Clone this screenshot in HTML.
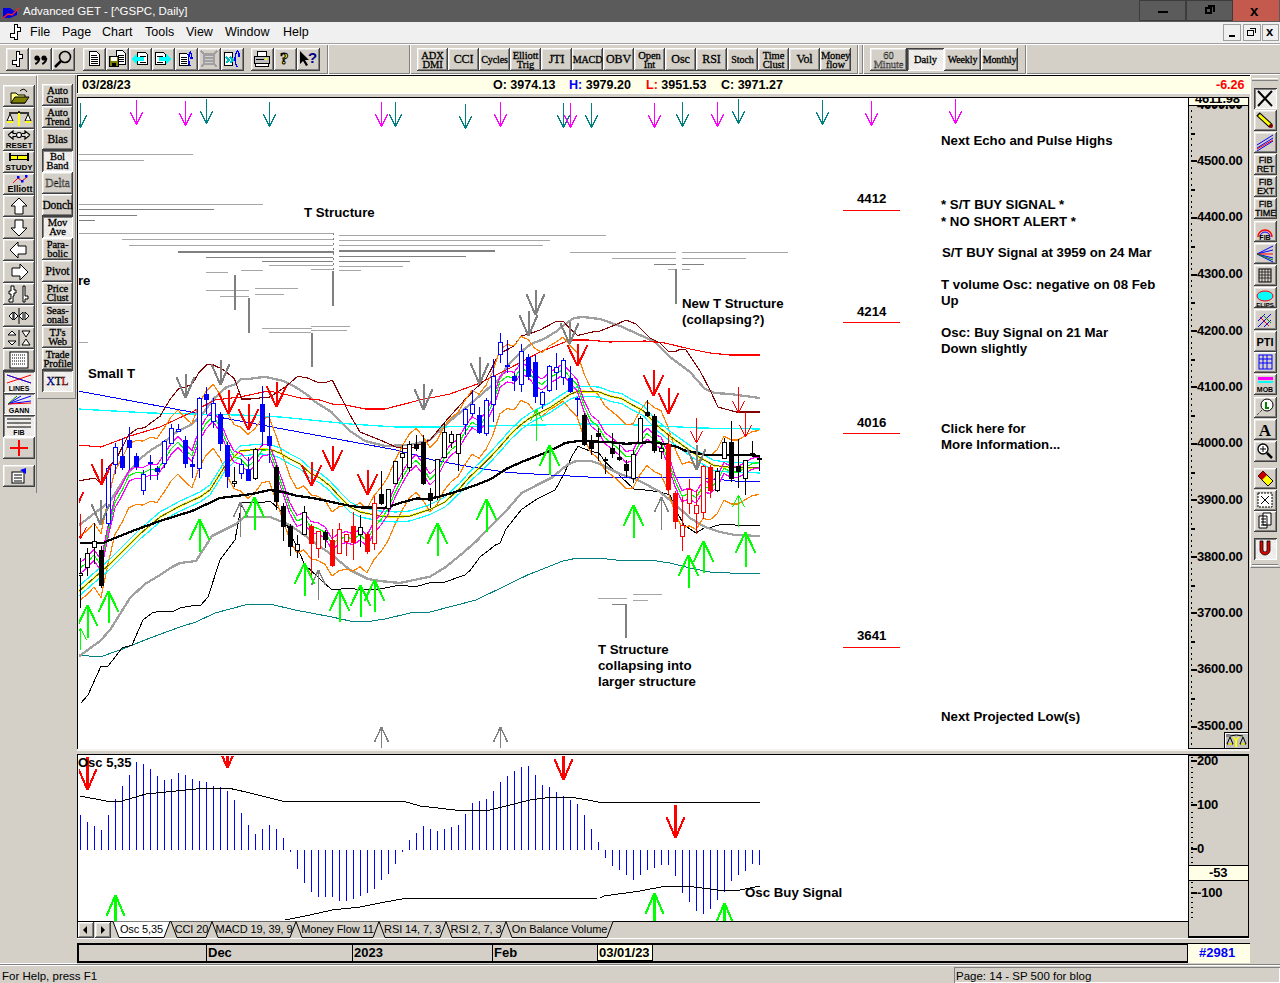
<!DOCTYPE html>
<html><head><meta charset="utf-8">
<style>
*{box-sizing:border-box;margin:0;padding:0}
html,body{width:1280px;height:983px;overflow:hidden;background:#d4d0c8;font-family:"Liberation Sans",sans-serif;position:relative}
.a{position:absolute}
.btn{position:absolute;background:#d4d0c8;box-shadow:inset -1px -1px #404040,inset 1px 1px #ffffff,inset -2px -2px #808080,inset 2px 2px #e8e6e2}
.prs{position:absolute;background-color:#e9e7e3;background-image:repeating-linear-gradient(45deg,rgba(255,255,255,.5) 0 1px,transparent 1px 2px);box-shadow:inset 1px 1px #404040,inset -1px -1px #ffffff,inset 2px 2px #808080}
.tl{position:absolute;left:0;right:0;text-align:center;font-family:"Liberation Serif",serif;color:#000;line-height:9px;font-size:11px}
.tb{font-family:"Liberation Serif",serif;font-size:11px;line-height:9px;text-align:center;color:#000;display:flex;align-items:center;justify-content:center;height:100%;letter-spacing:-0.1px;-webkit-text-stroke:0.3px #000}
.sunk{position:absolute;box-shadow:inset 1px 1px #808080,inset -1px -1px #ffffff}
.lbl{position:absolute;font-weight:bold;font-size:13.25px;color:#000;white-space:nowrap;line-height:16px}
.ax{position:absolute;font-weight:bold;font-size:13px;color:#000;white-space:nowrap;line-height:14px;letter-spacing:-0.2px}
svg{position:absolute;left:0;top:0}
</style></head><body>
<!-- title bar -->
<div class="a" style="left:0;top:0;width:1280px;height:22px;background:#5b5b5b"></div>
<svg width="20" height="16" style="left:2px;top:5px" viewBox="0 0 20 16"><path d="M1,3 L8,3 L12,6 L15,5 L15,10 L8,13 L1,13Z" fill="#0000e0"/><path d="M1,13 L6,9 L10,10 L17,3" stroke="#ff2020" stroke-width="1.4" fill="none"/></svg>
<div class="a" style="left:23px;top:3px;font-size:11.5px;color:#fff;white-space:nowrap;line-height:17px">Advanced GET - [^GSPC, Daily]</div>
<div class="a" style="left:1139px;top:0;width:47px;height:21px;background:#5b5b5b;border:1px solid #3c3c3c"></div>
<div class="a" style="left:1158px;top:11px;width:10px;height:2px;background:#000"></div>
<div class="a" style="left:1186px;top:0;width:47px;height:21px;background:#5b5b5b;border:1px solid #3c3c3c"></div>
<div class="a" style="left:1205px;top:7px;width:7px;height:7px;border:2px solid #000"></div>
<div class="a" style="left:1208px;top:5px;width:7px;height:7px;border-top:2px solid #000;border-right:2px solid #000"></div>
<div class="a" style="left:1233px;top:0;width:46px;height:21px;background:#c45a4e"></div>
<div class="a" style="left:1250px;top:2px;font-size:15px;font-weight:bold;color:#000;line-height:17px">x</div>
<!-- menu bar -->
<div class="a" style="left:0;top:22px;width:1280px;height:21px;background:#f0f0f0"></div>
<svg width="14" height="18" style="left:9px;top:23px" shape-rendering="crispEdges"><path d="M5.5,1.5 h3 v3 h3 v4 h-3 v8 h-3 v-2 h-4 v-4 h4z" fill="#fff" stroke="#000" stroke-width="1.3"/></svg>
<div class="a" style="left:30px;top:24px;font-size:12.5px;color:#000;line-height:17px;white-space:nowrap;word-spacing:0">File</div>
<div class="a" style="left:62px;top:24px;font-size:12.5px;color:#000;line-height:17px">Page</div>
<div class="a" style="left:102px;top:24px;font-size:12.5px;color:#000;line-height:17px">Chart</div>
<div class="a" style="left:145px;top:24px;font-size:12.5px;color:#000;line-height:17px">Tools</div>
<div class="a" style="left:186px;top:24px;font-size:12.5px;color:#000;line-height:17px">View</div>
<div class="a" style="left:225px;top:24px;font-size:12.5px;color:#000;line-height:17px">Window</div>
<div class="a" style="left:283px;top:24px;font-size:12.5px;color:#000;line-height:17px">Help</div>
<div class="a" style="left:1223px;top:24px;width:18px;height:17px;background:#f0f0f0;border:1px solid #a0a0a0"></div>
<div class="a" style="left:1229px;top:35px;width:6px;height:2px;background:#000"></div>
<div class="a" style="left:1243px;top:24px;width:18px;height:17px;background:#f0f0f0;border:1px solid #a0a0a0"></div>
<div class="a" style="left:1247px;top:30px;width:7px;height:6px;border:1.5px solid #000"></div>
<div class="a" style="left:1250px;top:28px;width:6px;height:5px;border-top:1.5px solid #000;border-right:1.5px solid #000"></div>
<div class="a" style="left:1262px;top:24px;width:17px;height:17px;background:#f0f0f0;border:1px solid #a0a0a0"></div>
<div class="a" style="left:1266px;top:24px;font-size:13px;font-weight:bold;line-height:16px">x</div>
<!-- toolbar -->
<div class="a" style="left:0;top:43px;width:1280px;height:1px;background:#a0a0a0"></div>
<div class="a" style="left:0;top:44px;width:1280px;height:1px;background:#ffffff"></div>
<div class="a" style="left:0;top:73px;width:1280px;height:1px;background:#808080"></div>
<div class="a" style="left:0;top:74px;width:1280px;height:1px;background:#ffffff"></div>
<div class="a" style="left:327px;top:45px;width:2px;height:29px;border-left:1px solid #808080;border-right:1px solid #fff"></div>
<div class="a" style="left:409px;top:45px;width:2px;height:29px;border-left:1px solid #808080;border-right:1px solid #fff"></div>
<div class="a" style="left:857px;top:45px;width:2px;height:29px;border-left:1px solid #808080;border-right:1px solid #fff"></div>
<div class="a" style="left:862px;top:45px;width:2px;height:29px;border-left:1px solid #808080;border-right:1px solid #fff"></div>
<div class="a" style="left:1025px;top:45px;width:2px;height:29px;border-left:1px solid #808080;border-right:1px solid #fff"></div>
<div class="btn" style="left:6px;top:48px;width:23px;height:23px"><div style="position:relative;width:23px;height:23px"><svg width="22" height="22" shape-rendering="crispEdges"><path d="M10.5,3.5 h3 v3 h3 v4 h-3 v8 h-3 v-2 h-4 v-4 h4z" fill="#fff" stroke="#000" stroke-width="1.2"/></svg></div></div>
<div class="btn" style="left:29px;top:48px;width:23px;height:23px"><div style="position:relative;width:23px;height:23px"><svg width="22" height="22"><circle cx="8" cy="10" r="2.6" fill="#000"/><path d="M10.3,10 q0,4 -4,6" stroke="#000" stroke-width="2" fill="none"/><circle cx="15" cy="10" r="2.6" fill="#000"/><path d="M17.3,10 q0,4 -4,6" stroke="#000" stroke-width="2" fill="none"/></svg></div></div>
<div class="btn" style="left:52px;top:48px;width:23px;height:23px"><div style="position:relative;width:23px;height:23px"><svg width="22" height="22"><circle cx="13" cy="9" r="5.5" fill="none" stroke="#000" stroke-width="1.6"/><path d="M9,13 L3,19" stroke="#000" stroke-width="2.5"/></svg></div></div>
<div class="btn" style="left:83px;top:48px;width:23px;height:23px"><div style="position:relative;width:23px;height:23px"><svg width="22" height="22" shape-rendering="crispEdges"><path d="M6.5,3.5 h7 l3,3 v11 h-10z" fill="#fff" stroke="#000"/><path d="M8,7.5h6M8,9.5h7M8,11.5h7M8,13.5h7M8,15.5h7" stroke="#000"/></svg></div></div>
<div class="btn" style="left:106px;top:48px;width:23px;height:23px"><div style="position:relative;width:23px;height:23px"><svg width="22" height="22" shape-rendering="crispEdges"><path d="M10.5,2.5 h6 l3,3 v11 h-9z" fill="#fff" stroke="#000"/><path d="M12,7.5h6M12,9.5h6M12,11.5h6M12,13.5h6" stroke="#000"/><rect x="3.5" y="8.5" width="9" height="10" fill="#808000" stroke="#000"/><rect x="5" y="9" width="6" height="4" fill="#fff"/><rect x="6" y="15" width="4" height="3" fill="#000"/></svg></div></div>
<div class="btn" style="left:129px;top:48px;width:23px;height:23px"><div style="position:relative;width:23px;height:23px"><svg width="22" height="22" shape-rendering="crispEdges"><path d="M8.5,4.5 h8 l2,2 v10 h-10z" fill="#fff" stroke="#000"/><path d="M11,8.5h6M11,14.5h6" stroke="#000"/><path d="M2,11 l6,-5 v3 h7 v4 h-7 v3z" fill="#00ffff"/></svg></div></div>
<div class="btn" style="left:152px;top:48px;width:23px;height:23px"><div style="position:relative;width:23px;height:23px"><svg width="22" height="22" shape-rendering="crispEdges"><path d="M3.5,4.5 h8 l2,2 v10 h-10z" fill="#fff" stroke="#000"/><path d="M5,8.5h6M5,14.5h6" stroke="#000"/><path d="M20,11 l-6,-5 v3 h-7 v4 h7 v3z" fill="#00ffff"/></svg></div></div>
<div class="btn" style="left:175px;top:48px;width:23px;height:23px"><div style="position:relative;width:23px;height:23px"><svg width="22" height="22" shape-rendering="crispEdges"><path d="M4.5,5.5 h7 l2,2 v10 h-9z" fill="#fff" stroke="#000"/><path d="M6,9.5h6M6,11.5h6M6,13.5h6M6,15.5h6" stroke="#000"/><path d="M15,4 q-3,7 0,14 M15,4 q3,3 1,6 l2,0" fill="none" stroke="#0000ff" stroke-width="1.5"/></svg></div></div>
<div class="btn" style="left:198px;top:48px;width:23px;height:23px"><div style="position:relative;width:23px;height:23px"><svg width="22" height="22" shape-rendering="crispEdges"><rect x="5" y="5" width="12" height="12" fill="#a0a0a0"/><path d="M3,3 L19,19 M19,3 L3,19" stroke="#a0a0a0" stroke-width="2"/><path d="M7,8h8M7,11h8M7,14h8" stroke="#d0d0d0"/></svg></div></div>
<div class="btn" style="left:221px;top:48px;width:23px;height:23px"><div style="position:relative;width:23px;height:23px"><svg width="22" height="22" shape-rendering="crispEdges"><path d="M3.5,4.5 h8 v13 h-8z" fill="#fff" stroke="#000"/><path d="M5,9 l3,3 l-3,3 M9,9 l3,3 l-3,3" fill="none" stroke="#00c0c0" stroke-width="1.5"/><path d="M16,3 q-4,8 0,16 M16,3 q3,2 2,6" fill="none" stroke="#0000ff" stroke-width="1.5"/></svg></div></div>
<div class="btn" style="left:251px;top:48px;width:23px;height:23px"><div style="position:relative;width:23px;height:23px"><svg width="22" height="22" shape-rendering="crispEdges"><path d="M6.5,3.5 h9 v5 h-9z" fill="#fff" stroke="#000"/><path d="M3.5,8.5 h15 v7 h-15z" fill="#c0c0c0" stroke="#000"/><path d="M4.5,15.5 h13 v3 h-13z" fill="#fff" stroke="#000"/><path d="M5,11.5h8" stroke="#000"/><rect x="14" y="10" width="2" height="2" fill="#ff0"/></svg></div></div>
<div class="btn" style="left:274px;top:48px;width:23px;height:23px"><div style="position:relative;width:23px;height:23px"><div style="position:absolute;left:6px;top:1px;font:bold 17px 'Liberation Serif',serif;color:#ff0;-webkit-text-stroke:1px #000">?</div></div></div>
<div class="btn" style="left:297px;top:48px;width:23px;height:23px"><div style="position:relative;width:23px;height:23px"><svg width="22" height="22"><path d="M3,3 v13 l3,-3 l3,5 l2,-1 l-3,-5 h4z" fill="#000"/></svg><div style="position:absolute;left:11px;top:1px;font:bold 15px 'Liberation Sans',sans-serif;color:#000080">?</div></div></div>
<div class="btn" style="left:417px;top:48px;width:31px;height:23px"><div class="tb" style="font-size:10.5px">ADX<br>DMI</div></div>
<div class="btn" style="left:448px;top:48px;width:31px;height:23px"><div class="tb" style="font-size:12px">CCI</div></div>
<div class="btn" style="left:479px;top:48px;width:31px;height:23px"><div class="tb" style="font-size:10px">Cycles</div></div>
<div class="btn" style="left:510px;top:48px;width:31px;height:23px"><div class="tb" style="font-size:10.5px">Elliott<br>Trig</div></div>
<div class="btn" style="left:541px;top:48px;width:31px;height:23px"><div class="tb" style="font-size:12px">JTI</div></div>
<div class="btn" style="left:572px;top:48px;width:31px;height:23px"><div class="tb" style="font-size:10px">MACD</div></div>
<div class="btn" style="left:603px;top:48px;width:31px;height:23px"><div class="tb" style="font-size:12px">OBV</div></div>
<div class="btn" style="left:634px;top:48px;width:31px;height:23px"><div class="tb" style="font-size:10.5px">Open<br>Int</div></div>
<div class="btn" style="left:665px;top:48px;width:31px;height:23px"><div class="tb" style="font-size:12px">Osc</div></div>
<div class="btn" style="left:696px;top:48px;width:31px;height:23px"><div class="tb" style="font-size:12px">RSI</div></div>
<div class="btn" style="left:727px;top:48px;width:31px;height:23px"><div class="tb" style="font-size:10px">Stoch</div></div>
<div class="btn" style="left:758px;top:48px;width:31px;height:23px"><div class="tb" style="font-size:10.5px">Time<br>Clust</div></div>
<div class="btn" style="left:789px;top:48px;width:31px;height:23px"><div class="tb" style="font-size:12px">Vol</div></div>
<div class="btn" style="left:820px;top:48px;width:31px;height:23px"><div class="tb" style="font-size:10.5px">Money<br>flow</div></div>
<div class="btn" style="left:870px;top:48px;width:37px;height:23px"><div class="tb" style="font-size:10.5px"><span style="color:#a0a0a0">60<br>Minute</span></div></div>
<div class="prs" style="left:907px;top:48px;width:37px;height:23px"><div class="tb" style="font-size:10.5px">Daily</div></div>
<div class="btn" style="left:944px;top:48px;width:37px;height:23px"><div class="tb" style="font-size:10px">Weekly</div></div>
<div class="btn" style="left:981px;top:48px;width:37px;height:23px"><div class="tb" style="font-size:10px">Monthly</div></div>
<!-- info bar -->
<div class="a" style="left:77px;top:75px;width:1173px;height:18px;background:#ffffe8;border-top:1px solid #000;border-left:1px solid #000"></div>
<div class="a" style="left:77px;top:93px;width:1173px;height:1px;background:#fff"></div>
<div class="lbl" style="left:82px;top:77px;font-size:12.5px">03/28/23</div>
<div class="lbl" style="left:493px;top:77px;font-size:12.5px">O: 3974.13</div>
<div class="lbl" style="left:569px;top:77px;font-size:12.5px"><span style="color:#0000ff">H:</span> 3979.20</div>
<div class="lbl" style="left:646px;top:77px;font-size:12.5px"><span style="color:#ff0000">L:</span> 3951.53</div>
<div class="lbl" style="left:721px;top:77px;font-size:12.5px">C: 3971.27</div>
<div class="lbl" style="left:1216px;top:77px;font-size:12.5px;color:#ff0000">-6.26</div>
<!-- left panels -->
<div class="a" style="left:0;top:75px;width:37px;height:418px;border-top:1px solid #fff;border-right:1px solid #808080"></div>
<div class="a" style="left:37px;top:75px;width:39px;height:324px;border-left:1px solid #fff;border-right:1px solid #808080;border-bottom:1px solid #808080"></div>
<div class="a" style="left:0;top:963px;width:77px;height:1px;background:#fff"></div>
<div class="btn" style="left:3px;top:85px;width:32px;height:22px"><svg style="position:absolute;left:0;top:0" width="32" height="22"><path d="M8,8 h5 l2,2 h7 v8 h-14z" fill="#ffff80" stroke="#000"/><path d="M8,18 l4,-6 h14 l-4,6z" fill="#808000" stroke="#000"/><path d="M17,6 q4,-4 7,1" fill="none" stroke="#000"/></svg></div>
<div class="btn" style="left:3px;top:107px;width:32px;height:22px"><svg style="position:absolute;left:0;top:0" width="32" height="22"><path d="M16,4 v15 M6,6 h20" stroke="#000" stroke-width="1.5"/><path d="M16,6 v13" stroke="#ff0" stroke-width="2"/><path d="M4,14 l3,-7 l3,7z M22,14 l3,-7 l3,7z" fill="#fff" stroke="#000"/><path d="M4,15h6M22,15h6" stroke="#ff0" stroke-width="2"/></svg></div>
<div class="btn" style="left:3px;top:129px;width:32px;height:22px"><svg style="position:absolute;left:0;top:0" width="32" height="22"><path d="M5,6 L10,2 V4.5 H13 M5,6 L10,10 V7.5 H13 M27,6 L22,2 V4.5 H19 M27,6 L22,10 V7.5 H19" fill="#fff" stroke="#000" stroke-width="1.2"/><circle cx="16" cy="6" r="2.5" fill="#fff" stroke="#000" stroke-width="1.2"/><text x="16" y="19" font-size="8" font-weight="bold" text-anchor="middle" font-family="Liberation Sans">RESET</text></svg></div>
<div class="btn" style="left:3px;top:151px;width:32px;height:22px"><svg style="position:absolute;left:0;top:0" width="32" height="22" shape-rendering="crispEdges"><rect x="7" y="4" width="18" height="4" fill="#ff0" stroke="#000"/><path d="M7,2v8M25,2v8" stroke="#000" stroke-width="2"/><path d="M14,4v4" stroke="#000"/><text x="16" y="19" font-size="8" font-weight="bold" text-anchor="middle" font-family="Liberation Sans">STUDY</text></svg></div>
<div class="btn" style="left:3px;top:173px;width:32px;height:22px"><svg style="position:absolute;left:0;top:0" width="32" height="22"><path d="M10,10 l5,-5 l4,3 l5,-4" fill="none" stroke="#f00"/><rect x="14" y="3" width="2.5" height="2.5" fill="#00f"/><rect x="18" y="7" width="2.5" height="2.5" fill="#00f"/><rect x="22" y="2" width="2.5" height="2.5" fill="#00f"/><text x="17" y="19" font-size="9" font-weight="bold" text-anchor="middle" font-family="Liberation Sans">Elliott</text></svg></div>
<div class="btn" style="left:3px;top:195px;width:32px;height:22px"><svg style="position:absolute;left:0;top:0" width="32" height="22"><path d="M16,3 l8,8 h-4 v8 h-8 v-8 h-4z" fill="#fff" stroke="#000"/></svg></div>
<div class="btn" style="left:3px;top:217px;width:32px;height:22px"><svg style="position:absolute;left:0;top:0" width="32" height="22"><path d="M16,19 l8,-8 h-4 v-8 h-8 v8 h-4z" fill="#fff" stroke="#000"/></svg></div>
<div class="btn" style="left:3px;top:239px;width:32px;height:22px"><svg style="position:absolute;left:0;top:0" width="32" height="22"><path d="M7,11 l8,-8 v4 h8 v8 h-8 v4z" fill="#fff" stroke="#000"/></svg></div>
<div class="btn" style="left:3px;top:261px;width:32px;height:22px"><svg style="position:absolute;left:0;top:0" width="32" height="22"><path d="M25,11 l-8,-8 v4 h-8 v8 h8 v4z" fill="#fff" stroke="#000"/></svg></div>
<div class="btn" style="left:3px;top:283px;width:32px;height:22px"><svg style="position:absolute;left:0;top:0" width="32" height="22"><path d="M8,3 h3 v4 h2 v3 h-2 v3 h-1 v6 h-4 v-3 h2 v-5 h-2 v-3 h2z M20,3 h2 v10 h3 v3 h-3 v3 h-2z" fill="#fff" stroke="#000"/></svg></div>
<div class="btn" style="left:3px;top:305px;width:32px;height:22px"><svg style="position:absolute;left:0;top:0" width="32" height="22"><path d="M6,11 l4,-4 v8z M11,7 l4,4 l-4,4z M20,7 l-4,4 l4,4z M22,7 l4,4 l-4,4z" fill="#fff" stroke="#000"/><path d="M16,3v16" stroke="#000"/></svg></div>
<div class="btn" style="left:3px;top:327px;width:32px;height:22px"><svg style="position:absolute;left:0;top:0" width="32" height="22"><path d="M9,4 l4,4 h-8z M9,18 l4,-4 h-8z M19,4 h8 l-4,6z M19,18 h8 l-4,-6z" fill="#fff" stroke="#000"/><path d="M16,3v16" stroke="#000"/></svg></div>
<div class="btn" style="left:3px;top:349px;width:32px;height:22px"><svg style="position:absolute;left:0;top:0" width="32" height="22"><rect x="7" y="3" width="18" height="16" fill="#fff" stroke="#000"/><path d="M7,3h18v16h-18z" fill="url(#dots)" /><g stroke="#000" stroke-dasharray="1,1"><path d="M9,6h14M9,9h14M9,12h14M9,15h14"/></g></svg></div>
<div class="prs" style="left:3px;top:371px;width:32px;height:22px"><svg style="position:absolute;left:0;top:0" width="32" height="22"><path d="M4,4 L28,12 M4,12 L28,4" stroke="#f00"/><path d="M4,4 L28,12" stroke="#00f"/><text x="16" y="20" font-size="7" font-weight="bold" text-anchor="middle" font-family="Liberation Sans">LINES</text></svg></div>
<div class="prs" style="left:3px;top:393px;width:32px;height:22px"><svg style="position:absolute;left:0;top:0" width="32" height="22"><path d="M5,11 L28,3 M5,11 L28,8 M5,11 L18,3" stroke="#00f"/><path d="M5,11 L28,10" stroke="#f00"/><path d="M5,11 L14,3" stroke="#080"/><text x="16" y="20" font-size="7" font-weight="bold" text-anchor="middle" font-family="Liberation Sans">GANN</text></svg></div>
<div class="prs" style="left:3px;top:415px;width:32px;height:22px"><svg style="position:absolute;left:0;top:0" width="32" height="22"><path d="M4,4h24M4,8h24M4,12h24" stroke="#000"/><text x="16" y="20" font-size="7" font-weight="bold" text-anchor="middle" font-family="Liberation Sans">FIB</text></svg></div>
<div class="btn" style="left:3px;top:437px;width:32px;height:22px"><svg style="position:absolute;left:0;top:0" width="32" height="22"><path d="M16,3v16M7,11h18" stroke="#f00" stroke-width="2"/></svg></div>
<div class="btn" style="left:3px;top:465px;width:32px;height:22px"><svg style="position:absolute;left:0;top:0" width="32" height="22"><rect x="9" y="7" width="12" height="11" fill="#fff" stroke="#000"/><path d="M11,10h8M11,13h8M11,16h8" stroke="#000"/><path d="M17,5 l6,-2 v6z" fill="#00f"/></svg></div>
<div class="btn" style="left:42px;top:84px;width:31px;height:22px"><div class="tb" style="font-size:10.5px">Auto<br>Gann</div></div>
<div class="btn" style="left:42px;top:106px;width:31px;height:22px"><div class="tb" style="font-size:10.5px">Auto<br>Trend</div></div>
<div class="btn" style="left:42px;top:128px;width:31px;height:22px"><div class="tb" style="font-size:11.5px">Bias</div></div>
<div class="prs" style="left:42px;top:150px;width:31px;height:22px"><div class="tb" style="font-size:10.5px">Bol<br>Band</div></div>
<div class="btn" style="left:42px;top:172px;width:31px;height:22px"><div class="tb" style="font-size:11.5px"><span style="color:#909090">Delta</span></div></div>
<div class="btn" style="left:42px;top:194px;width:31px;height:22px"><div class="tb" style="font-size:11.5px">Donch</div></div>
<div class="prs" style="left:42px;top:216px;width:31px;height:22px"><div class="tb" style="font-size:10.5px">Mov<br>Ave</div></div>
<div class="btn" style="left:42px;top:238px;width:31px;height:22px"><div class="tb" style="font-size:10.5px">Para-<br>bolic</div></div>
<div class="btn" style="left:42px;top:260px;width:31px;height:22px"><div class="tb" style="font-size:11.5px">Pivot</div></div>
<div class="btn" style="left:42px;top:282px;width:31px;height:22px"><div class="tb" style="font-size:10.5px">Price<br>Clust</div></div>
<div class="btn" style="left:42px;top:304px;width:31px;height:22px"><div class="tb" style="font-size:10.5px">Seas-<br>onals</div></div>
<div class="btn" style="left:42px;top:326px;width:31px;height:22px"><div class="tb" style="font-size:10.5px">TJ's<br>Web</div></div>
<div class="btn" style="left:42px;top:348px;width:31px;height:22px"><div class="tb" style="font-size:10.5px">Trade<br>Profile</div></div>
<div class="prs" style="left:42px;top:370px;width:31px;height:22px"><div class="tb" style="font-size:11.5px"><span style="color:#00f">X</span>T<span style="color:#f00">L</span></div></div>
<!-- right toolbar -->
<div class="a" style="left:1250px;top:75px;width:30px;height:493px;border-left:1px solid #fff;border-bottom:1px solid #808080"></div>
<div class="a" style="left:1252px;top:78px;width:26px;height:3px;border-top:1px solid #fff;border-bottom:1px solid #808080"></div>
<div class="prs" style="left:1254px;top:88px;width:23px;height:21px"><svg style="position:absolute;left:0;top:0" width="22" height="21"><path d="M4,3 L18,18 M18,3 L4,18" stroke="#000" stroke-width="2"/></svg></div>
<div class="btn" style="left:1254px;top:110px;width:23px;height:21px"><svg style="position:absolute;left:0;top:0" width="22" height="21"><path d="M4,4 L17,16" stroke="#000" stroke-width="5"/><path d="M5,5 L16,15" stroke="#ff0" stroke-width="3"/><circle cx="17" cy="16" r="2" fill="#800000"/></svg></div>
<div class="btn" style="left:1254px;top:132px;width:23px;height:21px"><svg style="position:absolute;left:0;top:0" width="22" height="21"><path d="M3,16 L19,6M3,13 L19,3M3,19 L19,9" stroke="#00f"/><path d="M3,17 L19,8" stroke="#f00"/></svg></div>
<div class="btn" style="left:1254px;top:154px;width:23px;height:21px"><div class="tb" style="font-family:'Liberation Sans',sans-serif;font-size:9px;line-height:9px">FIB<br>RET</div></div>
<div class="btn" style="left:1254px;top:176px;width:23px;height:21px"><div class="tb" style="font-family:'Liberation Sans',sans-serif;font-size:9px;line-height:9px">FIB<br>EXT</div></div>
<div class="btn" style="left:1254px;top:198px;width:23px;height:21px"><div class="tb" style="font-family:'Liberation Sans',sans-serif;font-size:9px;line-height:9px">FIB<br>TIME</div></div>
<div class="btn" style="left:1254px;top:221px;width:23px;height:21px"><svg style="position:absolute;left:0;top:0" width="22" height="21"><path d="M4,16 a7,7 0 0 1 14,0" fill="none" stroke="#f00" stroke-width="1.5"/><path d="M6,16 a5,5 0 0 1 10,0" fill="none" stroke="#00f"/><text x="11" y="19" font-size="7" font-weight="bold" text-anchor="middle" font-family="Liberation Sans">FIB</text></svg></div>
<div class="btn" style="left:1254px;top:243px;width:23px;height:21px"><svg style="position:absolute;left:0;top:0" width="22" height="21"><path d="M3,11 L19,3 M3,11 L19,7 M3,11 L19,15 M3,11 L19,19" stroke="#00f"/><path d="M3,11 L19,11" stroke="#f00"/><path d="M3,11 L19,17" stroke="#080"/></svg></div>
<div class="btn" style="left:1254px;top:265px;width:23px;height:21px"><svg style="position:absolute;left:0;top:0" width="22" height="21"><rect x="5" y="4" width="12" height="13" fill="none" stroke="#000"/><path d="M8,4v13M11,4v13M14,4v13M5,7h12M5,10h12M5,13h12" stroke="#000" stroke-width=".7"/></svg></div>
<div class="btn" style="left:1254px;top:287px;width:23px;height:21px"><svg style="position:absolute;left:0;top:0" width="22" height="21"><ellipse cx="11" cy="9" rx="8" ry="5" fill="#0ff" stroke="#f00"/><text x="11" y="20" font-size="6" font-weight="bold" text-anchor="middle" font-family="Liberation Sans">ELIPS</text></svg></div>
<div class="btn" style="left:1254px;top:309px;width:23px;height:21px"><svg style="position:absolute;left:0;top:0" width="22" height="21"><path d="M4,18 L17,5 M4,12 L11,5 M10,18 L17,11" stroke="#00f"/><path d="M6,8 L15,17" stroke="#f00"/><path d="M9,6 L17,14" stroke="#080"/></svg></div>
<div class="btn" style="left:1254px;top:331px;width:23px;height:21px"><svg style="position:absolute;left:0;top:0" width="22" height="21"><text x="11" y="15" font-size="11" font-weight="bold" text-anchor="middle" font-family="Liberation Sans">PTI</text></svg></div>
<div class="btn" style="left:1254px;top:352px;width:23px;height:21px"><svg style="position:absolute;left:0;top:0" width="22" height="21"><rect x="5" y="3" width="13" height="14" fill="none" stroke="#00f"/><path d="M9,3v14M13,3v14M5,7h13M5,11h13" stroke="#00f"/></svg></div>
<div class="btn" style="left:1254px;top:374px;width:23px;height:21px"><svg style="position:absolute;left:0;top:0" width="22" height="21"><rect x="4" y="3" width="15" height="3" fill="#f0f"/><rect x="4" y="7" width="15" height="2" fill="#0ff"/><text x="11" y="18" font-size="7" font-weight="bold" text-anchor="middle" font-family="Liberation Sans">MOB</text></svg></div>
<div class="btn" style="left:1254px;top:397px;width:23px;height:21px"><svg style="position:absolute;left:0;top:0" width="22" height="21"><circle cx="13" cy="8" r="6" fill="#fff" stroke="#000"/><path d="M12,5 v6 h3" stroke="#080" stroke-width="2" fill="none"/><path d="M8,13 L3,18" stroke="#000" stroke-dasharray="1,1"/></svg></div>
<div class="btn" style="left:1254px;top:419px;width:23px;height:21px"><svg style="position:absolute;left:0;top:0" width="22" height="21"><text x="11" y="17" font-size="17" font-weight="bold" text-anchor="middle" font-family="Liberation Serif">A</text></svg></div>
<div class="btn" style="left:1254px;top:441px;width:23px;height:21px"><svg style="position:absolute;left:0;top:0" width="22" height="21"><circle cx="9" cy="8" r="5" fill="#fff" stroke="#000" stroke-width="1.3"/><path d="M9,5v6M6,8h6" stroke="#000"/><path d="M13,12 L18,17" stroke="#000" stroke-width="2.5"/></svg></div>
<div class="btn" style="left:1254px;top:468px;width:23px;height:21px"><svg style="position:absolute;left:0;top:0" width="22" height="21"><path d="M4,8 L9,3 L19,13 L14,18z" fill="#ff0" stroke="#000"/><path d="M4,8 L9,3 L13,7 L8,12z" fill="#c00000"/></svg></div>
<div class="btn" style="left:1254px;top:490px;width:23px;height:21px"><svg style="position:absolute;left:0;top:0" width="22" height="21"><rect x="4" y="3" width="14" height="14" fill="#fff" stroke="#000" stroke-dasharray="2,1"/><path d="M7,6 L15,14 M15,6 L7,14" stroke="#000"/></svg></div>
<div class="btn" style="left:1254px;top:511px;width:23px;height:21px"><svg style="position:absolute;left:0;top:0" width="22" height="21"><path d="M5,5h8v12h-8z M9,2h8v12h-8z" fill="#fff" stroke="#000"/><path d="M7,8h5M7,11h5M7,14h5" stroke="#000"/></svg></div>
<div class="prs" style="left:1254px;top:538px;width:23px;height:22px"><svg style="position:absolute;left:0;top:0" width="22" height="21"><path d="M6,3 v9 a5,5 0 0 0 10,0 v-9 h-3 v9 a2,2 0 0 1 -4,0 v-9z" fill="#e00000" stroke="#000" stroke-width=".8"/></svg></div>
<div class="a" style="left:1252px;top:564px;width:26px;height:1px;background:#808080"></div><div class="a" style="left:1252px;top:565px;width:26px;height:1px;background:#fff"></div>
<!-- main chart -->
<div class="a" style="left:77px;top:97px;width:1112px;height:652px;background:#fff;border-top:1px solid #000;border-left:1px solid #000"></div>
<svg width="1280" height="983" style="left:0;top:0" shape-rendering="crispEdges">
<defs><clipPath id="cc"><rect x="79" y="98" width="1109" height="650"/></clipPath></defs>
<g clip-path="url(#cc)">
<line x1="78" y1="154.5" x2="193" y2="154.5" stroke="#a6a6a6" stroke-width="1"/>
<line x1="78" y1="160.5" x2="144" y2="160.5" stroke="#a6a6a6" stroke-width="1"/>
<line x1="78" y1="204.5" x2="263" y2="204.5" stroke="#a6a6a6" stroke-width="1"/>
<line x1="78" y1="209.5" x2="214" y2="209.5" stroke="#808080" stroke-width="1.3"/>
<line x1="78" y1="215.5" x2="137" y2="215.5" stroke="#808080" stroke-width="1.3"/>
<line x1="78" y1="220.5" x2="95" y2="220.5" stroke="#808080" stroke-width="1.3"/>
<line x1="78" y1="233.5" x2="333" y2="233.5" stroke="#a6a6a6" stroke-width="1"/>
<line x1="122" y1="239.5" x2="333" y2="239.5" stroke="#a6a6a6" stroke-width="1"/>
<line x1="129" y1="245.5" x2="333" y2="245.5" stroke="#a6a6a6" stroke-width="1"/>
<line x1="178" y1="251.5" x2="334" y2="251.5" stroke="#808080" stroke-width="2"/>
<line x1="206" y1="257.5" x2="333" y2="257.5" stroke="#808080" stroke-width="1.3"/>
<line x1="262" y1="261.5" x2="333" y2="261.5" stroke="#808080" stroke-width="1.3"/>
<line x1="269" y1="265.5" x2="333" y2="265.5" stroke="#a6a6a6" stroke-width="1"/>
<line x1="311" y1="269.5" x2="333" y2="269.5" stroke="#a6a6a6" stroke-width="1"/>
<line x1="206" y1="272.5" x2="228" y2="272.5" stroke="#a6a6a6" stroke-width="1"/>
<line x1="241" y1="270.5" x2="263" y2="270.5" stroke="#a6a6a6" stroke-width="1"/>
<line x1="206" y1="290.5" x2="249" y2="290.5" stroke="#a6a6a6" stroke-width="1"/>
<line x1="220" y1="296.5" x2="249" y2="296.5" stroke="#a6a6a6" stroke-width="1"/>
<line x1="255" y1="288.5" x2="298" y2="288.5" stroke="#a6a6a6" stroke-width="1"/>
<line x1="255" y1="294.5" x2="284" y2="294.5" stroke="#a6a6a6" stroke-width="1"/>
<line x1="262" y1="328.5" x2="312" y2="328.5" stroke="#a6a6a6" stroke-width="1"/>
<line x1="269" y1="332.5" x2="311" y2="332.5" stroke="#a6a6a6" stroke-width="1"/>
<line x1="311" y1="326.5" x2="350" y2="326.5" stroke="#a6a6a6" stroke-width="1"/>
<line x1="311" y1="330.5" x2="347" y2="330.5" stroke="#a6a6a6" stroke-width="1"/>
<line x1="78" y1="342.5" x2="88" y2="342.5" stroke="#a6a6a6" stroke-width="1"/>
<line x1="339" y1="235.5" x2="588" y2="235.5" stroke="#a6a6a6" stroke-width="1"/>
<line x1="339" y1="240.5" x2="550" y2="240.5" stroke="#a6a6a6" stroke-width="1"/>
<line x1="339" y1="245.5" x2="543" y2="245.5" stroke="#a6a6a6" stroke-width="1"/>
<line x1="339" y1="250.5" x2="495" y2="250.5" stroke="#808080" stroke-width="2"/>
<line x1="339" y1="256.5" x2="466" y2="256.5" stroke="#808080" stroke-width="1.3"/>
<line x1="339" y1="261.5" x2="410" y2="261.5" stroke="#808080" stroke-width="1.3"/>
<line x1="339" y1="266.5" x2="403" y2="266.5" stroke="#a6a6a6" stroke-width="1"/>
<line x1="339" y1="270.5" x2="361" y2="270.5" stroke="#a6a6a6" stroke-width="1"/>
<line x1="570" y1="252.5" x2="606" y2="252.5" stroke="#a6a6a6" stroke-width="1"/>
<line x1="588" y1="235.5" x2="606" y2="235.5" stroke="#a6a6a6" stroke-width="1"/>
<line x1="588" y1="252.5" x2="676" y2="252.5" stroke="#a6a6a6" stroke-width="1"/>
<line x1="682" y1="252.5" x2="788" y2="252.5" stroke="#a6a6a6" stroke-width="1"/>
<line x1="612" y1="258.5" x2="676" y2="258.5" stroke="#a6a6a6" stroke-width="1"/>
<line x1="682" y1="258.5" x2="746" y2="258.5" stroke="#a6a6a6" stroke-width="1"/>
<line x1="654" y1="264.5" x2="676" y2="264.5" stroke="#808080" stroke-width="1.5"/>
<line x1="682" y1="264.5" x2="704" y2="264.5" stroke="#808080" stroke-width="1.3"/>
<line x1="668" y1="269.5" x2="676" y2="269.5" stroke="#a6a6a6" stroke-width="1"/>
<line x1="682" y1="269.5" x2="690" y2="269.5" stroke="#a6a6a6" stroke-width="1"/>
<line x1="598" y1="598.5" x2="627" y2="598.5" stroke="#a6a6a6" stroke-width="1"/>
<line x1="633" y1="594.5" x2="662" y2="594.5" stroke="#a6a6a6" stroke-width="1"/>
<line x1="633" y1="600.5" x2="648" y2="600.5" stroke="#a6a6a6" stroke-width="1"/>
<line x1="612" y1="604.5" x2="625" y2="604.5" stroke="#808080" stroke-width="1.3"/>
<line x1="234.5" y1="275" x2="234.5" y2="310" stroke="#808080" stroke-width="2"/>
<line x1="248.5" y1="298" x2="248.5" y2="333" stroke="#808080" stroke-width="2"/>
<line x1="332.5" y1="271" x2="332.5" y2="306" stroke="#808080" stroke-width="2"/>
<line x1="311.5" y1="333" x2="311.5" y2="367" stroke="#808080" stroke-width="2"/>
<line x1="675.5" y1="269" x2="675.5" y2="304" stroke="#808080" stroke-width="2"/>
<line x1="625.5" y1="604" x2="625.5" y2="638" stroke="#808080" stroke-width="2"/>
<line x1="333.5" y1="233" x2="333.5" y2="271" stroke="#808080" stroke-width="1" stroke-dasharray="2,3"/>
<polyline points="78.0,655.0 100.0,657.0 120.0,650.0 150.0,638.0 180.0,627.0 196.0,622.0 215.0,613.0 245.0,605.0 270.0,604.0 295.0,610.0 332.0,617.0 350.0,621.0 365.0,622.0 385.0,619.0 410.0,613.0 430.0,612.0 476.0,600.0 527.6,575.0 562.7,561.0 576.0,558.3 590.0,559.0 598.0,558.0 625.0,561.0 650.0,560.0 670.0,563.0 690.0,568.0 710.0,572.0 730.0,573.0 760.0,573.0" fill="none" stroke="#008080" stroke-width="1" stroke-linejoin="round"/>
<polyline points="81.0,703.0 88.0,695.0 101.0,666.0 108.0,666.0 116.0,656.0 122.0,648.0 132.0,645.0 143.0,620.0 152.0,613.0 160.0,611.0 172.0,612.0 180.0,608.0 196.0,605.0 200.0,606.0 208.0,597.0 220.0,560.0 235.0,540.0 242.0,502.0 260.0,503.0 270.0,501.0 280.0,510.0 305.0,565.0 332.0,590.0 350.0,588.0 360.0,590.0 380.0,589.0 400.0,585.0 415.0,587.0 430.0,582.7 445.0,582.0 465.0,575.0 470.0,570.5 480.0,557.0 495.6,545.0 500.0,543.0 506.0,529.0 521.5,509.5 537.0,499.0 555.0,490.0 564.0,474.0 572.0,456.0 578.0,446.3 591.0,451.4 599.0,453.0 605.0,461.6 613.4,470.0 620.0,476.0 634.0,489.0 645.0,490.0 660.0,492.0 670.0,495.0 676.0,510.0 684.0,525.0 696.0,533.0 704.0,528.0 712.0,527.0 722.0,524.0 735.0,525.0 760.0,526.0" fill="none" stroke="#000000" stroke-width="1" stroke-linejoin="round"/>
<polyline points="78.0,657.0 100.0,641.0 110.0,630.0 130.0,598.0 145.0,584.0 160.0,575.0 172.0,567.0 180.0,563.0 196.0,561.0 212.0,536.0 236.0,524.0 244.0,517.0 270.0,517.0 290.0,525.0 332.0,555.0 350.0,570.0 368.0,579.0 380.0,581.0 400.0,583.0 430.0,576.6 445.0,567.5 460.5,555.0 476.0,541.5 491.0,526.0 506.0,511.0 521.5,493.0 537.0,485.0 552.0,477.5 567.0,465.0 575.0,461.4 590.0,460.7 600.0,464.0 620.0,474.0 640.0,481.0 660.0,492.0 676.0,505.0 690.0,518.0 705.0,527.0 720.0,532.0 735.0,535.0 760.0,536.0" fill="none" stroke="#a0a0a0" stroke-width="2.3" stroke-linejoin="round"/>
<polyline points="78.0,526.0 106.5,504.0 111.0,500.0 126.0,476.0 138.5,460.0 151.0,450.0 163.5,442.5 176.0,432.5 192.0,424.0 201.0,416.0 213.5,399.0 226.0,387.5 236.0,384.0 241.0,379.0 250.0,378.8 265.0,376.8 283.6,381.0 296.0,387.5 307.0,394.6 315.0,401.7 331.4,412.0 350.0,431.0 365.0,441.0 385.0,446.0 410.0,445.0 430.0,440.0 450.0,421.0 475.0,400.0 500.0,378.0 508.0,365.0 522.0,351.0 531.0,344.0 544.0,339.0 557.0,331.0 564.0,325.0 574.0,318.0 583.0,317.0 600.0,319.0 620.0,326.0 640.0,335.0 655.0,342.0 670.0,357.0 690.0,372.0 705.0,389.0 715.0,393.0 730.0,394.0 760.0,398.0" fill="none" stroke="#a0a0a0" stroke-width="2.3" stroke-linejoin="round"/>
<polyline points="78.0,391.0 396.0,450.0 433.0,460.0 471.0,467.0 508.0,472.5 551.0,475.0 588.0,477.0 690.0,477.0 735.0,481.0 760.0,482.0" fill="none" stroke="#0000ff" stroke-width="1" stroke-linejoin="round"/>
<polyline points="78.0,409.0 150.0,413.0 250.0,415.3 280.0,417.0 320.0,421.0 350.0,424.0 396.0,427.0 440.0,427.0 588.0,424.0 640.0,425.0 700.0,428.0 760.0,429.0" fill="none" stroke="#00ffff" stroke-width="1.3" stroke-linejoin="round"/>
<polyline points="78.0,445.0 101.0,447.0 130.0,436.0 160.0,427.0 190.0,413.0 215.0,400.0 240.0,397.0 268.0,391.0 280.0,393.0 300.0,398.0 320.0,400.0 332.0,404.0 346.0,405.0 365.0,409.0 385.0,409.0 420.0,400.0 450.0,394.0 480.0,383.0 510.0,368.0 540.0,352.0 570.0,340.0 588.0,340.0 610.0,342.0 645.0,341.0 665.0,343.0 690.0,349.0 710.0,353.0 730.0,355.0 760.0,355.0" fill="none" stroke="#ff0000" stroke-width="1.1" stroke-linejoin="round"/>
<polyline points="78.0,481.0 95.0,478.0 101.0,484.0 108.5,467.5 117.0,457.5 128.5,435.0 137.0,429.0 145.0,427.5 150.0,423.4 160.0,416.3 170.3,399.0 178.5,388.8 184.6,387.3 192.7,383.7 198.8,372.5 207.0,364.4 212.0,364.4 223.0,369.5 234.4,378.7 241.6,399.0 250.0,399.0 270.0,397.0 285.6,386.5 297.8,376.3 307.0,377.8 318.0,382.4 326.0,382.4 332.4,380.3 350.0,415.0 360.0,432.0 380.0,440.0 396.0,447.0 410.0,449.0 430.0,440.0 445.0,422.0 460.0,405.0 475.0,389.0 486.0,379.0 499.0,354.0 514.0,346.0 521.0,336.0 529.0,334.0 540.0,330.0 555.0,322.0 563.0,321.0 569.0,327.5 577.5,335.5 592.5,332.0 600.0,331.0 615.0,325.0 626.0,320.0 636.0,324.0 650.0,338.0 660.0,343.0 668.0,351.0 675.0,352.0 680.0,349.0 686.0,350.0 700.0,371.0 710.0,390.0 718.0,407.0 736.0,412.0 760.0,412.0" fill="none" stroke="#800000" stroke-width="1.1" stroke-linejoin="round"/>
<polyline points="80.0,536.0 87.0,530.6 94.0,523.0 101.0,533.6 108.0,499.7 115.0,470.4 122.0,458.3 129.0,443.7 136.0,440.6 143.0,441.0 150.0,437.5 157.0,438.3 164.0,428.3 171.0,417.1 178.0,410.0 185.0,417.6 192.0,423.8 199.0,403.8 206.0,391.4 213.0,384.3 220.0,394.0 227.0,411.6 234.0,424.6 241.0,427.2 248.0,434.6 255.0,428.4 262.0,418.7 269.0,417.1 276.0,435.6 283.0,456.3 290.0,476.5 297.0,489.0 304.0,485.9 311.0,494.9 318.0,496.4 325.0,500.4 332.0,512.1 339.0,506.7 346.0,505.1 353.0,507.1 360.0,502.8 367.0,508.7 374.0,495.5 381.0,487.5 388.0,476.9 395.0,460.2 402.0,446.5 409.0,434.5 416.0,428.3 423.0,436.4 430.0,447.6 437.0,440.5 444.0,426.5 451.0,417.9 458.0,412.5 465.0,400.3 472.0,390.3 479.0,394.2 486.0,385.2 493.0,370.9 500.0,349.7 507.0,344.4 514.0,345.9 521.0,336.5 528.0,339.4 535.0,348.5 542.0,352.6 549.0,346.1 556.0,342.1 563.0,337.2 570.0,345.3 577.0,352.8 584.0,373.7 591.0,388.6 598.0,394.2 605.0,406.1 612.0,411.5 619.0,417.3 626.0,424.9 633.0,423.9 640.0,410.6 647.0,401.4 654.0,407.6 661.0,410.5 668.0,426.9 675.0,448.8 682.0,464.1 689.0,461.7 696.0,465.5 703.0,454.5 710.0,455.9 717.0,450.0 724.0,436.0 731.0,439.9 738.0,440.1 745.0,435.8 752.0,431.8 759.0,430.4" fill="none" stroke="#ff8000" stroke-width="1.2"/>
<polyline points="80.0,600.0 87.0,594.6 94.0,587.0 101.0,597.6 108.0,563.7 115.0,534.4 122.0,522.3 129.0,507.7 136.0,504.6 143.0,505.0 150.0,501.5 157.0,502.3 164.0,492.3 171.0,481.1 178.0,474.0 185.0,481.6 192.0,487.8 199.0,467.8 206.0,455.4 213.0,448.3 220.0,458.0 227.0,475.6 234.0,488.6 241.0,491.2 248.0,498.6 255.0,492.4 262.0,482.7 269.0,481.1 276.0,499.6 283.0,520.3 290.0,540.5 297.0,553.0 304.0,549.9 311.0,558.9 318.0,560.4 325.0,564.4 332.0,576.1 339.0,570.7 346.0,569.1 353.0,571.1 360.0,566.8 367.0,572.7 374.0,559.5 381.0,551.5 388.0,540.9 395.0,524.2 402.0,510.5 409.0,498.5 416.0,492.3 423.0,500.4 430.0,511.6 437.0,504.5 444.0,490.5 451.0,481.9 458.0,476.5 465.0,464.3 472.0,454.3 479.0,458.2 486.0,449.2 493.0,434.9 500.0,413.7 507.0,408.4 514.0,409.9 521.0,400.5 528.0,403.4 535.0,412.5 542.0,416.6 549.0,410.1 556.0,406.1 563.0,401.2 570.0,409.3 577.0,416.8 584.0,437.7 591.0,452.6 598.0,458.2 605.0,470.1 612.0,475.5 619.0,481.3 626.0,488.9 633.0,487.9 640.0,474.6 647.0,465.4 654.0,471.6 661.0,474.5 668.0,490.9 675.0,512.8 682.0,528.1 689.0,525.7 696.0,529.5 703.0,518.5 710.0,519.9 717.0,514.0 724.0,500.0 731.0,503.9 738.0,504.1 745.0,499.8 752.0,495.8 759.0,494.4" fill="none" stroke="#ff8000" stroke-width="1.2"/>
<polyline points="78.0,587.0 110.0,559.0 140.0,529.0 160.0,512.0 180.0,501.0 200.0,492.0 210.0,485.0 225.0,461.0 240.0,446.0 250.0,445.0 262.0,444.0 272.0,445.0 280.0,448.0 290.0,454.0 300.0,459.0 310.0,468.0 320.0,473.0 330.0,481.0 340.0,492.0 350.0,502.0 360.0,507.0 370.0,509.0 380.0,511.0 396.0,512.0 410.0,511.0 430.0,504.5 445.0,497.0 460.0,483.0 470.0,471.5 480.0,462.4 490.5,452.0 501.0,440.5 511.0,429.0 521.0,419.6 530.0,413.0 540.0,407.7 550.0,402.6 560.5,395.5 570.7,389.0 578.0,386.4 599.0,387.0 611.0,391.5 621.5,393.5 630.0,398.6 643.0,405.6 657.0,420.5 671.0,432.0 685.0,442.0 700.0,452.6 714.0,460.5 728.0,462.0 760.0,463.0" fill="none" stroke="#00ffff" stroke-width="1.2"/>
<polyline points="78.0,597.0 110.0,569.0 140.0,539.0 160.0,522.0 180.0,511.0 200.0,502.0 210.0,495.0 225.0,471.0 240.0,456.0 250.0,455.0 262.0,454.0 272.0,455.0 280.0,458.0 290.0,464.0 300.0,469.0 310.0,478.0 320.0,483.0 330.0,491.0 340.0,502.0 350.0,512.0 360.0,517.0 370.0,519.0 380.0,521.0 396.0,522.0 410.0,521.0 430.0,514.5 445.0,507.0 460.0,493.0 470.0,481.5 480.0,472.4 490.5,462.0 501.0,450.5 511.0,439.0 521.0,429.6 530.0,423.0 540.0,417.7 550.0,412.6 560.5,405.5 570.7,399.0 578.0,396.4 599.0,397.0 611.0,401.5 621.5,403.5 630.0,408.6 643.0,415.6 657.0,430.5 671.0,442.0 685.0,452.0 700.0,462.6 714.0,470.5 728.0,472.0 760.0,473.0" fill="none" stroke="#00ffff" stroke-width="1.2"/>
<polyline points="78.0,592.0 110.0,564.0 140.0,534.0 160.0,517.0 180.0,506.0 200.0,497.0 210.0,490.0 225.0,466.0 240.0,451.0 250.0,450.0 262.0,449.0 272.0,450.0 280.0,453.0 290.0,459.0 300.0,464.0 310.0,473.0 320.0,478.0 330.0,486.0 340.0,497.0 350.0,507.0 360.0,512.0 370.0,514.0 380.0,516.0 396.0,517.0 410.0,516.0 430.0,509.5 445.0,502.0 460.0,488.0 470.0,476.5 480.0,467.4 490.5,457.0 501.0,445.5 511.0,434.0 521.0,424.6 530.0,418.0 540.0,412.7 550.0,407.6 560.5,400.5 570.7,394.0 578.0,391.4 599.0,392.0 611.0,396.5 621.5,398.5 630.0,403.6 643.0,410.6 657.0,425.5 671.0,437.0 685.0,447.0 700.0,457.6 714.0,465.5 728.0,467.0 760.0,468.0" fill="none" stroke="#ffff00" stroke-width="2.2"/>
<polyline points="78.0,592.0 110.0,564.0 140.0,534.0 160.0,517.0 180.0,506.0 200.0,497.0 210.0,490.0 225.0,466.0 240.0,451.0 250.0,450.0 262.0,449.0 272.0,450.0 280.0,453.0 290.0,459.0 300.0,464.0 310.0,473.0 320.0,478.0 330.0,486.0 340.0,497.0 350.0,507.0 360.0,512.0 370.0,514.0 380.0,516.0 396.0,517.0 410.0,516.0 430.0,509.5 445.0,502.0 460.0,488.0 470.0,476.5 480.0,467.4 490.5,457.0 501.0,445.5 511.0,434.0 521.0,424.6 530.0,418.0 540.0,412.7 550.0,407.6 560.5,400.5 570.7,394.0 578.0,391.4 599.0,392.0 611.0,396.5 621.5,398.5 630.0,403.6 643.0,410.6 657.0,425.5 671.0,437.0 685.0,447.0 700.0,457.6 714.0,465.5 728.0,467.0 760.0,468.0" fill="none" stroke="#606000" stroke-width="1"/>
<polyline points="80.0,562.5 87.0,557.1 94.0,549.5 101.0,560.1 108.0,526.2 115.0,496.9 122.0,484.8 129.0,470.2 136.0,467.1 143.0,467.5 150.0,464.0 157.0,464.8 164.0,454.8 171.0,443.6 178.0,436.5 185.0,444.1 192.0,450.3 199.0,430.3 206.0,417.9 213.0,410.8 220.0,420.5 227.0,438.1 234.0,451.1 241.0,453.7 248.0,461.1 255.0,454.9 262.0,445.2 269.0,443.6 276.0,462.1 283.0,482.8 290.0,503.0 297.0,515.5 304.0,512.4 311.0,521.4 318.0,522.9 325.0,526.9 332.0,538.6 339.0,533.2 346.0,531.6 353.0,533.6 360.0,529.3 367.0,535.2 374.0,522.0 381.0,514.0 388.0,503.4 395.0,486.7 402.0,473.0 409.0,461.0 416.0,454.8 423.0,462.9 430.0,474.1 437.0,467.0 444.0,453.0 451.0,444.4 458.0,439.0 465.0,426.8 472.0,416.8 479.0,420.7 486.0,411.7 493.0,397.4 500.0,376.2 507.0,370.9 514.0,372.4 521.0,363.0 528.0,365.9 535.0,375.0 542.0,379.1 549.0,372.6 556.0,368.6 563.0,363.7 570.0,371.8 577.0,379.3 584.0,400.2 591.0,415.1 598.0,420.7 605.0,432.6 612.0,438.0 619.0,443.8 626.0,451.4 633.0,450.4 640.0,437.1 647.0,427.9 654.0,434.1 661.0,437.0 668.0,453.4 675.0,475.3 682.0,490.6 689.0,488.2 696.0,492.0 703.0,481.0 710.0,482.4 717.0,476.5 724.0,462.5 731.0,466.4 738.0,466.6 745.0,462.3 752.0,458.3 759.0,456.9" fill="none" stroke="#ff00ff" stroke-width="1.2"/>
<polyline points="80.0,573.5 87.0,568.1 94.0,560.5 101.0,571.1 108.0,537.2 115.0,507.9 122.0,495.8 129.0,481.2 136.0,478.1 143.0,478.5 150.0,475.0 157.0,475.8 164.0,465.8 171.0,454.6 178.0,447.5 185.0,455.1 192.0,461.3 199.0,441.3 206.0,428.9 213.0,421.8 220.0,431.5 227.0,449.1 234.0,462.1 241.0,464.7 248.0,472.1 255.0,465.9 262.0,456.2 269.0,454.6 276.0,473.1 283.0,493.8 290.0,514.0 297.0,526.5 304.0,523.4 311.0,532.4 318.0,533.9 325.0,537.9 332.0,549.6 339.0,544.2 346.0,542.6 353.0,544.6 360.0,540.3 367.0,546.2 374.0,533.0 381.0,525.0 388.0,514.4 395.0,497.7 402.0,484.0 409.0,472.0 416.0,465.8 423.0,473.9 430.0,485.1 437.0,478.0 444.0,464.0 451.0,455.4 458.0,450.0 465.0,437.8 472.0,427.8 479.0,431.7 486.0,422.7 493.0,408.4 500.0,387.2 507.0,381.9 514.0,383.4 521.0,374.0 528.0,376.9 535.0,386.0 542.0,390.1 549.0,383.6 556.0,379.6 563.0,374.7 570.0,382.8 577.0,390.3 584.0,411.2 591.0,426.1 598.0,431.7 605.0,443.6 612.0,449.0 619.0,454.8 626.0,462.4 633.0,461.4 640.0,448.1 647.0,438.9 654.0,445.1 661.0,448.0 668.0,464.4 675.0,486.3 682.0,501.6 689.0,499.2 696.0,503.0 703.0,492.0 710.0,493.4 717.0,487.5 724.0,473.5 731.0,477.4 738.0,477.6 745.0,473.3 752.0,469.3 759.0,467.9" fill="none" stroke="#ff00ff" stroke-width="1.2"/>
<polyline points="80.0,568.0 87.0,562.6 94.0,555.0 101.0,565.6 108.0,531.7 115.0,502.4 122.0,490.3 129.0,475.7 136.0,472.6 143.0,473.0 150.0,469.5 157.0,470.3 164.0,460.3 171.0,449.1 178.0,442.0 185.0,449.6 192.0,455.8 199.0,435.8 206.0,423.4 213.0,416.3 220.0,426.0 227.0,443.6 234.0,456.6 241.0,459.2 248.0,466.6 255.0,460.4 262.0,450.7 269.0,449.1 276.0,467.6 283.0,488.3 290.0,508.5 297.0,521.0 304.0,517.9 311.0,526.9 318.0,528.4 325.0,532.4 332.0,544.1 339.0,538.7 346.0,537.1 353.0,539.1 360.0,534.8 367.0,540.7 374.0,527.5 381.0,519.5 388.0,508.9 395.0,492.2 402.0,478.5 409.0,466.5 416.0,460.3 423.0,468.4 430.0,479.6 437.0,472.5 444.0,458.5 451.0,449.9 458.0,444.5 465.0,432.3 472.0,422.3 479.0,426.2 486.0,417.2 493.0,402.9 500.0,381.7 507.0,376.4 514.0,377.9 521.0,368.5 528.0,371.4 535.0,380.5 542.0,384.6 549.0,378.1 556.0,374.1 563.0,369.2 570.0,377.3 577.0,384.8 584.0,405.7 591.0,420.6 598.0,426.2 605.0,438.1 612.0,443.5 619.0,449.3 626.0,456.9 633.0,455.9 640.0,442.6 647.0,433.4 654.0,439.6 661.0,442.5 668.0,458.9 675.0,480.8 682.0,496.1 689.0,493.7 696.0,497.5 703.0,486.5 710.0,487.9 717.0,482.0 724.0,468.0 731.0,471.9 738.0,472.1 745.0,467.8 752.0,463.8 759.0,462.4" fill="none" stroke="#00ff00" stroke-width="1.2"/>
<polyline points="80.0,543.0 103.0,543.0 110.0,540.0 135.0,530.0 160.0,521.0 192.0,511.0 220.0,498.0 252.0,494.0 270.0,490.0 283.0,492.0 296.0,495.6 310.0,497.6 323.0,500.0 336.0,503.0 349.0,505.6 362.0,507.5 385.0,507.8 400.0,503.0 416.0,498.6 430.0,498.8 445.0,495.0 460.5,490.4 476.0,485.0 491.0,479.0 506.0,469.0 521.5,462.0 537.0,456.0 550.5,450.8 565.0,443.0 580.0,440.8 596.0,441.5 611.0,442.3 626.0,443.8 651.0,442.0 668.0,444.5 677.0,447.0 685.0,450.5 694.0,452.3 705.0,455.0 718.0,454.8 747.0,454.8 760.0,456.0" fill="none" stroke="#000000" stroke-width="2.3" stroke-linejoin="round"/>
<rect x="80" y="558" width="1" height="50" fill="#000000"/>
<rect x="78.5" y="573.5" width="4" height="2" fill="#fff" stroke="#000000" stroke-width="1"/>
<rect x="87" y="548" width="1" height="28" fill="#000000"/>
<rect x="85.5" y="553.5" width="4" height="14" fill="#fff" stroke="#000000" stroke-width="1"/>
<rect x="94" y="523" width="1" height="41" fill="#000000"/>
<rect x="92.5" y="541.5" width="4" height="6" fill="#fff" stroke="#000000" stroke-width="1"/>
<rect x="101" y="546" width="1" height="42" fill="#000000"/>
<rect x="99" y="550" width="5" height="36" fill="#000000"/>
<rect x="108" y="466" width="1" height="60" fill="#0000ff"/>
<rect x="106.5" y="468.5" width="4" height="55" fill="#fff" stroke="#0000ff" stroke-width="1"/>
<rect x="115" y="443" width="1" height="31" fill="#0000ff"/>
<rect x="113.5" y="447.5" width="4" height="17" fill="#fff" stroke="#0000ff" stroke-width="1"/>
<rect x="122" y="438" width="1" height="32" fill="#0000ff"/>
<rect x="120" y="456" width="5" height="12" fill="#0000ff"/>
<rect x="129" y="427" width="1" height="43" fill="#0000ff"/>
<rect x="127" y="440" width="5" height="8" fill="#0000ff"/>
<rect x="136" y="453" width="1" height="17" fill="#0000ff"/>
<rect x="134" y="456" width="5" height="11" fill="#0000ff"/>
<rect x="143" y="470" width="1" height="25" fill="#0000ff"/>
<rect x="141.5" y="474.5" width="4" height="16" fill="#fff" stroke="#0000ff" stroke-width="1"/>
<rect x="150" y="455" width="1" height="25" fill="#0000ff"/>
<rect x="148" y="462" width="5" height="2" fill="#0000ff"/>
<rect x="157" y="466" width="1" height="14" fill="#0000ff"/>
<rect x="155" y="468" width="5" height="4" fill="#0000ff"/>
<rect x="164" y="440" width="1" height="28" fill="#0000ff"/>
<rect x="162.5" y="441.5" width="4" height="22" fill="#fff" stroke="#0000ff" stroke-width="1"/>
<rect x="171" y="424" width="1" height="19" fill="#0000ff"/>
<rect x="169.5" y="428.5" width="4" height="15" fill="#fff" stroke="#0000ff" stroke-width="1"/>
<rect x="178" y="424" width="1" height="8" fill="#0000ff"/>
<rect x="176.5" y="429.5" width="4" height="2" fill="#fff" stroke="#0000ff" stroke-width="1"/>
<rect x="185" y="436" width="1" height="32" fill="#0000ff"/>
<rect x="183" y="440" width="5" height="24" fill="#0000ff"/>
<rect x="192" y="457" width="1" height="21" fill="#0000ff"/>
<rect x="190" y="464" width="5" height="3" fill="#0000ff"/>
<rect x="199" y="397" width="1" height="81" fill="#0000ff"/>
<rect x="197.5" y="398.5" width="4" height="70" fill="#fff" stroke="#0000ff" stroke-width="1"/>
<rect x="206" y="387" width="1" height="27" fill="#0000ff"/>
<rect x="204" y="394" width="5" height="6" fill="#0000ff"/>
<rect x="213" y="398" width="1" height="30" fill="#0000ff"/>
<rect x="211.5" y="403.5" width="4" height="18" fill="#fff" stroke="#0000ff" stroke-width="1"/>
<rect x="220" y="412" width="1" height="39" fill="#0000ff"/>
<rect x="218" y="414" width="5" height="30" fill="#0000ff"/>
<rect x="227" y="442" width="1" height="46" fill="#0000ff"/>
<rect x="225" y="445" width="5" height="32" fill="#0000ff"/>
<rect x="234" y="467" width="1" height="20" fill="#000000"/>
<rect x="232.5" y="481.5" width="4" height="2" fill="#fff" stroke="#000000" stroke-width="1"/>
<rect x="241" y="459" width="1" height="20" fill="#0000ff"/>
<rect x="239.5" y="464.5" width="4" height="9" fill="#fff" stroke="#0000ff" stroke-width="1"/>
<rect x="248" y="457" width="1" height="23" fill="#0000ff"/>
<rect x="246" y="469" width="5" height="12" fill="#0000ff"/>
<rect x="255" y="448" width="1" height="32" fill="#000000"/>
<rect x="253.5" y="449.5" width="4" height="29" fill="#fff" stroke="#000000" stroke-width="1"/>
<rect x="262" y="386" width="1" height="60" fill="#0000ff"/>
<rect x="260" y="404" width="5" height="28" fill="#0000ff"/>
<rect x="269" y="413" width="1" height="50" fill="#0000ff"/>
<rect x="267" y="436" width="5" height="10" fill="#0000ff"/>
<rect x="276" y="465" width="1" height="45" fill="#000000"/>
<rect x="274" y="467" width="5" height="35" fill="#000000"/>
<rect x="283" y="503" width="1" height="38" fill="#000000"/>
<rect x="281" y="506" width="5" height="21" fill="#000000"/>
<rect x="290" y="524" width="1" height="32" fill="#000000"/>
<rect x="288" y="526" width="5" height="21" fill="#000000"/>
<rect x="297" y="535" width="1" height="23" fill="#000000"/>
<rect x="295.5" y="544.5" width="4" height="6" fill="#fff" stroke="#000000" stroke-width="1"/>
<rect x="304" y="506" width="1" height="29" fill="#000000"/>
<rect x="302.5" y="512.5" width="4" height="22" fill="#fff" stroke="#000000" stroke-width="1"/>
<rect x="311" y="524" width="1" height="52" fill="#ff0000"/>
<rect x="309" y="526" width="5" height="18" fill="#ff0000"/>
<rect x="318" y="531" width="1" height="27" fill="#ff0000"/>
<rect x="316.5" y="531.5" width="4" height="17" fill="#fff" stroke="#ff0000" stroke-width="1"/>
<rect x="325" y="530" width="1" height="18" fill="#000000"/>
<rect x="323" y="532" width="5" height="8" fill="#000000"/>
<rect x="332" y="529" width="1" height="38" fill="#ff0000"/>
<rect x="330" y="540" width="5" height="26" fill="#ff0000"/>
<rect x="339" y="523" width="1" height="30" fill="#ff0000"/>
<rect x="337.5" y="529.5" width="4" height="24" fill="#fff" stroke="#ff0000" stroke-width="1"/>
<rect x="346" y="534" width="1" height="22" fill="#ff0000"/>
<rect x="344.5" y="534.5" width="4" height="7" fill="#fff" stroke="#ff0000" stroke-width="1"/>
<rect x="353" y="512" width="1" height="48" fill="#ff0000"/>
<rect x="351" y="526" width="5" height="17" fill="#ff0000"/>
<rect x="360" y="515" width="1" height="32" fill="#000000"/>
<rect x="358.5" y="527.5" width="4" height="7" fill="#fff" stroke="#000000" stroke-width="1"/>
<rect x="367" y="532" width="1" height="22" fill="#ff0000"/>
<rect x="365" y="534" width="5" height="18" fill="#ff0000"/>
<rect x="374" y="496" width="1" height="54" fill="#ff0000"/>
<rect x="372.5" y="503.5" width="4" height="40" fill="#fff" stroke="#ff0000" stroke-width="1"/>
<rect x="381" y="471" width="1" height="34" fill="#000000"/>
<rect x="379" y="494" width="5" height="10" fill="#000000"/>
<rect x="388" y="489" width="1" height="23" fill="#000000"/>
<rect x="386.5" y="489.5" width="4" height="19" fill="#fff" stroke="#000000" stroke-width="1"/>
<rect x="395" y="461" width="1" height="23" fill="#000000"/>
<rect x="393.5" y="461.5" width="4" height="22" fill="#fff" stroke="#000000" stroke-width="1"/>
<rect x="402" y="445" width="1" height="34" fill="#000000"/>
<rect x="400.5" y="453.5" width="4" height="4" fill="#fff" stroke="#000000" stroke-width="1"/>
<rect x="409" y="441" width="1" height="31" fill="#000000"/>
<rect x="407.5" y="444.5" width="4" height="23" fill="#fff" stroke="#000000" stroke-width="1"/>
<rect x="416" y="435" width="1" height="16" fill="#000000"/>
<rect x="414" y="444" width="5" height="5" fill="#000000"/>
<rect x="423" y="435" width="1" height="50" fill="#000000"/>
<rect x="421" y="442" width="5" height="42" fill="#000000"/>
<rect x="430" y="488" width="1" height="20" fill="#000000"/>
<rect x="428" y="493" width="5" height="8" fill="#000000"/>
<rect x="437" y="459" width="1" height="41" fill="#000000"/>
<rect x="435.5" y="459.5" width="4" height="37" fill="#fff" stroke="#000000" stroke-width="1"/>
<rect x="444" y="422" width="1" height="35" fill="#000000"/>
<rect x="442.5" y="432.5" width="4" height="25" fill="#fff" stroke="#000000" stroke-width="1"/>
<rect x="451" y="431" width="1" height="17" fill="#000000"/>
<rect x="449.5" y="434.5" width="4" height="8" fill="#fff" stroke="#000000" stroke-width="1"/>
<rect x="458" y="434" width="1" height="37" fill="#000000"/>
<rect x="456.5" y="434.5" width="4" height="19" fill="#fff" stroke="#000000" stroke-width="1"/>
<rect x="465" y="408" width="1" height="27" fill="#0000ff"/>
<rect x="463.5" y="409.5" width="4" height="15" fill="#fff" stroke="#0000ff" stroke-width="1"/>
<rect x="472" y="390" width="1" height="26" fill="#0000ff"/>
<rect x="470.5" y="404.5" width="4" height="9" fill="#fff" stroke="#0000ff" stroke-width="1"/>
<rect x="479" y="407" width="1" height="27" fill="#0000ff"/>
<rect x="477" y="415" width="5" height="18" fill="#0000ff"/>
<rect x="486" y="398" width="1" height="38" fill="#0000ff"/>
<rect x="484.5" y="400.5" width="4" height="33" fill="#fff" stroke="#0000ff" stroke-width="1"/>
<rect x="493" y="359" width="1" height="63" fill="#0000ff"/>
<rect x="491.5" y="376.5" width="4" height="28" fill="#fff" stroke="#0000ff" stroke-width="1"/>
<rect x="500" y="333" width="1" height="30" fill="#0000ff"/>
<rect x="498.5" y="342.5" width="4" height="12" fill="#fff" stroke="#0000ff" stroke-width="1"/>
<rect x="507" y="340" width="1" height="33" fill="#0000ff"/>
<rect x="505" y="365" width="5" height="2" fill="#0000ff"/>
<rect x="514" y="373" width="1" height="18" fill="#0000ff"/>
<rect x="512" y="376" width="5" height="5" fill="#0000ff"/>
<rect x="521" y="344" width="1" height="48" fill="#0000ff"/>
<rect x="519.5" y="351.5" width="4" height="33" fill="#fff" stroke="#0000ff" stroke-width="1"/>
<rect x="528" y="354" width="1" height="26" fill="#0000ff"/>
<rect x="526" y="357" width="5" height="20" fill="#0000ff"/>
<rect x="535" y="355" width="1" height="48" fill="#0000ff"/>
<rect x="533" y="362" width="5" height="35" fill="#0000ff"/>
<rect x="542" y="391" width="1" height="18" fill="#0000ff"/>
<rect x="540.5" y="392.5" width="4" height="12" fill="#fff" stroke="#0000ff" stroke-width="1"/>
<rect x="549" y="365" width="1" height="27" fill="#0000ff"/>
<rect x="547.5" y="366.5" width="4" height="24" fill="#fff" stroke="#0000ff" stroke-width="1"/>
<rect x="556" y="353" width="1" height="37" fill="#0000ff"/>
<rect x="554.5" y="367.5" width="4" height="5" fill="#fff" stroke="#0000ff" stroke-width="1"/>
<rect x="563" y="358" width="1" height="27" fill="#0000ff"/>
<rect x="561.5" y="360.5" width="4" height="17" fill="#fff" stroke="#0000ff" stroke-width="1"/>
<rect x="570" y="366" width="1" height="27" fill="#0000ff"/>
<rect x="568" y="378" width="5" height="14" fill="#0000ff"/>
<rect x="577" y="397" width="1" height="19" fill="#0000ff"/>
<rect x="575" y="398" width="5" height="2" fill="#0000ff"/>
<rect x="584" y="413" width="1" height="33" fill="#000000"/>
<rect x="582" y="415" width="5" height="30" fill="#000000"/>
<rect x="591" y="435" width="1" height="20" fill="#000000"/>
<rect x="589" y="441" width="5" height="8" fill="#000000"/>
<rect x="598" y="428" width="1" height="33" fill="#000000"/>
<rect x="596" y="433" width="5" height="4" fill="#000000"/>
<rect x="605" y="457" width="1" height="17" fill="#000000"/>
<rect x="603" y="459" width="5" height="2" fill="#000000"/>
<rect x="612" y="433" width="1" height="25" fill="#000000"/>
<rect x="610" y="448" width="5" height="6" fill="#000000"/>
<rect x="619" y="445" width="1" height="16" fill="#000000"/>
<rect x="617" y="457" width="5" height="3" fill="#000000"/>
<rect x="626" y="460" width="1" height="17" fill="#000000"/>
<rect x="624" y="464" width="5" height="7" fill="#000000"/>
<rect x="633" y="450" width="1" height="33" fill="#000000"/>
<rect x="631.5" y="454.5" width="4" height="24" fill="#fff" stroke="#000000" stroke-width="1"/>
<rect x="640" y="416" width="1" height="28" fill="#000000"/>
<rect x="638.5" y="418.5" width="4" height="24" fill="#fff" stroke="#000000" stroke-width="1"/>
<rect x="647" y="400" width="1" height="17" fill="#000000"/>
<rect x="645" y="412" width="5" height="4" fill="#000000"/>
<rect x="654" y="414" width="1" height="39" fill="#000000"/>
<rect x="652" y="416" width="5" height="35" fill="#000000"/>
<rect x="661" y="444" width="1" height="15" fill="#000000"/>
<rect x="659.5" y="448.5" width="4" height="3" fill="#fff" stroke="#000000" stroke-width="1"/>
<rect x="668" y="434" width="1" height="60" fill="#ff0000"/>
<rect x="666" y="444" width="5" height="46" fill="#ff0000"/>
<rect x="675" y="491" width="1" height="38" fill="#ff0000"/>
<rect x="673" y="493" width="5" height="29" fill="#ff0000"/>
<rect x="682" y="497" width="1" height="54" fill="#ff0000"/>
<rect x="680.5" y="525.5" width="4" height="11" fill="#fff" stroke="#ff0000" stroke-width="1"/>
<rect x="689" y="479" width="1" height="35" fill="#ff0000"/>
<rect x="687.5" y="489.5" width="4" height="14" fill="#fff" stroke="#ff0000" stroke-width="1"/>
<rect x="696" y="490" width="1" height="44" fill="#ff0000"/>
<rect x="694.5" y="505.5" width="4" height="8" fill="#fff" stroke="#ff0000" stroke-width="1"/>
<rect x="703" y="465" width="1" height="54" fill="#ff0000"/>
<rect x="701.5" y="466.5" width="4" height="46" fill="#fff" stroke="#ff0000" stroke-width="1"/>
<rect x="710" y="465" width="1" height="33" fill="#ff0000"/>
<rect x="708" y="467" width="5" height="24" fill="#ff0000"/>
<rect x="717" y="468" width="1" height="24" fill="#000000"/>
<rect x="715.5" y="471.5" width="4" height="19" fill="#fff" stroke="#000000" stroke-width="1"/>
<rect x="724" y="438" width="1" height="20" fill="#000000"/>
<rect x="722.5" y="442.5" width="4" height="16" fill="#fff" stroke="#000000" stroke-width="1"/>
<rect x="731" y="421" width="1" height="61" fill="#000000"/>
<rect x="729" y="442" width="5" height="37" fill="#000000"/>
<rect x="738" y="439" width="1" height="49" fill="#000000"/>
<rect x="736" y="466" width="5" height="6" fill="#000000"/>
<rect x="745" y="460" width="1" height="35" fill="#000000"/>
<rect x="743.5" y="460.5" width="4" height="18" fill="#fff" stroke="#000000" stroke-width="1"/>
<rect x="752" y="441" width="1" height="16" fill="#000000"/>
<rect x="750" y="453" width="5" height="3" fill="#000000"/>
<rect x="759" y="455" width="1" height="16" fill="#000000"/>
<rect x="757" y="458" width="5" height="2" fill="#000000"/>
<path d="M80.5,103 L80.5,128 M74.5,115 L80.5,128 L86.5,115" fill="none" stroke="#008080" stroke-width="1.3" stroke-linejoin="bevel"/>
<path d="M136.5,100 L136.5,125 M130.5,112 L136.5,125 L142.5,112" fill="none" stroke="#ff00ff" stroke-width="1.3" stroke-linejoin="bevel"/>
<path d="M185.5,101 L185.5,126 M179.5,113 L185.5,126 L191.5,113" fill="none" stroke="#ff00ff" stroke-width="1.3" stroke-linejoin="bevel"/>
<path d="M206.5,99 L206.5,124 M200.5,111 L206.5,124 L212.5,111" fill="none" stroke="#008080" stroke-width="1.3" stroke-linejoin="bevel"/>
<path d="M269.5,102 L269.5,127 M263.5,114 L269.5,127 L275.5,114" fill="none" stroke="#008080" stroke-width="1.3" stroke-linejoin="bevel"/>
<path d="M381.5,102 L381.5,127 M375.5,114 L381.5,127 L387.5,114" fill="none" stroke="#ff00ff" stroke-width="1.3" stroke-linejoin="bevel"/>
<path d="M395.5,102 L395.5,127 M389.5,114 L395.5,127 L401.5,114" fill="none" stroke="#008080" stroke-width="1.3" stroke-linejoin="bevel"/>
<path d="M465.5,104 L465.5,129 M459.5,116 L465.5,129 L471.5,116" fill="none" stroke="#008080" stroke-width="1.3" stroke-linejoin="bevel"/>
<path d="M500.5,102 L500.5,127 M494.5,114 L500.5,127 L506.5,114" fill="none" stroke="#ff00ff" stroke-width="1.3" stroke-linejoin="bevel"/>
<path d="M563.5,103 L563.5,128 M557.5,115 L563.5,128 L569.5,115" fill="none" stroke="#008080" stroke-width="1.3" stroke-linejoin="bevel"/>
<path d="M570.5,103 L570.5,128 M564.5,115 L570.5,128 L576.5,115" fill="none" stroke="#ff00ff" stroke-width="1.3" stroke-linejoin="bevel"/>
<path d="M591.5,103 L591.5,128 M585.5,115 L591.5,128 L597.5,115" fill="none" stroke="#008080" stroke-width="1.3" stroke-linejoin="bevel"/>
<path d="M654.5,103 L654.5,128 M648.5,115 L654.5,128 L660.5,115" fill="none" stroke="#ff00ff" stroke-width="1.3" stroke-linejoin="bevel"/>
<path d="M682.5,102 L682.5,127 M676.5,114 L682.5,127 L688.5,114" fill="none" stroke="#008080" stroke-width="1.3" stroke-linejoin="bevel"/>
<path d="M717.5,102 L717.5,127 M711.5,114 L717.5,127 L723.5,114" fill="none" stroke="#ff00ff" stroke-width="1.3" stroke-linejoin="bevel"/>
<path d="M738.5,99 L738.5,124 M732.5,111 L738.5,124 L744.5,111" fill="none" stroke="#008080" stroke-width="1.3" stroke-linejoin="bevel"/>
<path d="M822.5,100 L822.5,125 M816.5,112 L822.5,125 L828.5,112" fill="none" stroke="#008080" stroke-width="1.3" stroke-linejoin="bevel"/>
<path d="M871.5,101 L871.5,126 M865.5,113 L871.5,126 L877.5,113" fill="none" stroke="#ff00ff" stroke-width="1.3" stroke-linejoin="bevel"/>
<path d="M955.5,99 L955.5,124 M949.5,111 L955.5,124 L961.5,111" fill="none" stroke="#ff00ff" stroke-width="1.3" stroke-linejoin="bevel"/>
<path d="M100.5,500 L100.5,525 M91.5,504 L100.5,525 L109.5,504" fill="none" stroke="#808080" stroke-width="2" stroke-linejoin="bevel"/>
<path d="M185.5,374 L185.5,398 M176.5,377 L185.5,398 L194.5,377" fill="none" stroke="#808080" stroke-width="2" stroke-linejoin="bevel"/>
<path d="M220.5,360 L220.5,385 M211.5,364 L220.5,385 L229.5,364" fill="none" stroke="#808080" stroke-width="2" stroke-linejoin="bevel"/>
<path d="M423.5,384 L423.5,410 M414.5,389 L423.5,410 L432.5,389" fill="none" stroke="#808080" stroke-width="2" stroke-linejoin="bevel"/>
<path d="M479.5,357 L479.5,384 M470.5,363 L479.5,384 L488.5,363" fill="none" stroke="#808080" stroke-width="2" stroke-linejoin="bevel"/>
<path d="M528.5,311 L528.5,336 M519.5,315 L528.5,336 L537.5,315" fill="none" stroke="#808080" stroke-width="2" stroke-linejoin="bevel"/>
<path d="M535.5,290 L535.5,315 M526.5,294 L535.5,315 L544.5,294" fill="none" stroke="#808080" stroke-width="2" stroke-linejoin="bevel"/>
<path d="M569.5,322 L569.5,344 M560.5,323 L569.5,344 L578.5,323" fill="none" stroke="#808080" stroke-width="2" stroke-linejoin="bevel"/>
<path d="M696.5,445 L696.5,470 M687.5,449 L696.5,470 L705.5,449" fill="none" stroke="#808080" stroke-width="2" stroke-linejoin="bevel"/>
<path d="M240.5,537 L240.5,502 M233.5,517 L240.5,502 L247.5,517" fill="none" stroke="#808080" stroke-width="1.5" stroke-linejoin="bevel"/>
<path d="M318.5,600 L318.5,570 M311.5,585 L318.5,570 L325.5,585" fill="none" stroke="#808080" stroke-width="1.5" stroke-linejoin="bevel"/>
<path d="M661.5,530 L661.5,497 M654.5,512 L661.5,497 L668.5,512" fill="none" stroke="#808080" stroke-width="1.5" stroke-linejoin="bevel"/>
<path d="M381.5,748 L381.5,727 M374.5,742 L381.5,727 L388.5,742" fill="none" stroke="#808080" stroke-width="1.5" stroke-linejoin="bevel"/>
<path d="M500.5,748 L500.5,727 M493.5,742 L500.5,727 L507.5,742" fill="none" stroke="#808080" stroke-width="1.5" stroke-linejoin="bevel"/>
<path d="M73.5,487 L73.5,513 M63.5,492 L73.5,513 L83.5,492" fill="none" stroke="#ff0000" stroke-width="2" stroke-linejoin="bevel"/>
<path d="M101.5,459 L101.5,485 M91.5,464 L101.5,485 L111.5,464" fill="none" stroke="#ff0000" stroke-width="2" stroke-linejoin="bevel"/>
<path d="M228.5,390 L228.5,414 M218.5,393 L228.5,414 L238.5,393" fill="none" stroke="#ff0000" stroke-width="2" stroke-linejoin="bevel"/>
<path d="M248.5,404 L248.5,430 M238.5,409 L248.5,430 L258.5,409" fill="none" stroke="#ff0000" stroke-width="2" stroke-linejoin="bevel"/>
<path d="M276.5,382 L276.5,407 M266.5,386 L276.5,407 L286.5,386" fill="none" stroke="#ff0000" stroke-width="2" stroke-linejoin="bevel"/>
<path d="M311.5,462 L311.5,486 M301.5,465 L311.5,486 L321.5,465" fill="none" stroke="#ff0000" stroke-width="2" stroke-linejoin="bevel"/>
<path d="M332.5,446 L332.5,471 M322.5,450 L332.5,471 L342.5,450" fill="none" stroke="#ff0000" stroke-width="2" stroke-linejoin="bevel"/>
<path d="M367.5,470 L367.5,495 M357.5,474 L367.5,495 L377.5,474" fill="none" stroke="#ff0000" stroke-width="2" stroke-linejoin="bevel"/>
<path d="M577.5,344 L577.5,366 M567.5,345 L577.5,366 L587.5,345" fill="none" stroke="#ff0000" stroke-width="2" stroke-linejoin="bevel"/>
<path d="M653.5,370 L653.5,396 M643.5,375 L653.5,396 L663.5,375" fill="none" stroke="#ff0000" stroke-width="2" stroke-linejoin="bevel"/>
<path d="M668.5,388 L668.5,414 M658.5,393 L668.5,414 L678.5,393" fill="none" stroke="#ff0000" stroke-width="2" stroke-linejoin="bevel"/>
<path d="M80.5,514 L80.5,539 M74.5,527 L80.5,539 L86.5,527" fill="none" stroke="#ff0000" stroke-width="1.3" stroke-linejoin="bevel"/>
<path d="M696.5,418 L696.5,443 M690.5,431 L696.5,443 L702.5,431" fill="none" stroke="#ff0000" stroke-width="1.3" stroke-linejoin="bevel"/>
<path d="M738.5,387 L738.5,413 M732.5,401 L738.5,413 L744.5,401" fill="none" stroke="#ff0000" stroke-width="1.3" stroke-linejoin="bevel"/>
<path d="M745.5,412 L745.5,437 M739.5,425 L745.5,437 L751.5,425" fill="none" stroke="#ff0000" stroke-width="1.3" stroke-linejoin="bevel"/>
<path d="M87.5,638 L87.5,605 M77.5,626 L87.5,605 L97.5,626" fill="none" stroke="#00ff00" stroke-width="2" stroke-linejoin="bevel"/>
<path d="M108.5,623 L108.5,591 M98.5,612 L108.5,591 L118.5,612" fill="none" stroke="#00ff00" stroke-width="2" stroke-linejoin="bevel"/>
<path d="M199.5,552 L199.5,519 M189.5,540 L199.5,519 L209.5,540" fill="none" stroke="#00ff00" stroke-width="2" stroke-linejoin="bevel"/>
<path d="M254.5,530 L254.5,497 M244.5,518 L254.5,497 L264.5,518" fill="none" stroke="#00ff00" stroke-width="2" stroke-linejoin="bevel"/>
<path d="M304.5,596 L304.5,563 M294.5,584 L304.5,563 L314.5,584" fill="none" stroke="#00ff00" stroke-width="2" stroke-linejoin="bevel"/>
<path d="M339.5,622 L339.5,590 M329.5,611 L339.5,590 L349.5,611" fill="none" stroke="#00ff00" stroke-width="2" stroke-linejoin="bevel"/>
<path d="M360.5,617 L360.5,585 M350.5,606 L360.5,585 L370.5,606" fill="none" stroke="#00ff00" stroke-width="2" stroke-linejoin="bevel"/>
<path d="M374.5,612 L374.5,580 M364.5,601 L374.5,580 L384.5,601" fill="none" stroke="#00ff00" stroke-width="2" stroke-linejoin="bevel"/>
<path d="M437.5,556 L437.5,523 M427.5,544 L437.5,523 L447.5,544" fill="none" stroke="#00ff00" stroke-width="2" stroke-linejoin="bevel"/>
<path d="M486.5,532 L486.5,499 M476.5,520 L486.5,499 L496.5,520" fill="none" stroke="#00ff00" stroke-width="2" stroke-linejoin="bevel"/>
<path d="M549.5,475 L549.5,445 M539.5,466 L549.5,445 L559.5,466" fill="none" stroke="#00ff00" stroke-width="2" stroke-linejoin="bevel"/>
<path d="M633.5,538 L633.5,505 M623.5,526 L633.5,505 L643.5,526" fill="none" stroke="#00ff00" stroke-width="2" stroke-linejoin="bevel"/>
<path d="M688.5,588 L688.5,555 M678.5,576 L688.5,555 L698.5,576" fill="none" stroke="#00ff00" stroke-width="2" stroke-linejoin="bevel"/>
<path d="M703.5,573 L703.5,541 M693.5,562 L703.5,541 L713.5,562" fill="none" stroke="#00ff00" stroke-width="2" stroke-linejoin="bevel"/>
<path d="M745.5,567 L745.5,532 M735.5,553 L745.5,532 L755.5,553" fill="none" stroke="#00ff00" stroke-width="2" stroke-linejoin="bevel"/>
<path d="M80.5,650 L80.5,628 M74.5,640 L80.5,628 L86.5,640" fill="none" stroke="#00ff00" stroke-width="1.3" stroke-linejoin="bevel"/>
<path d="M536.5,441 L536.5,409 M530.5,421 L536.5,409 L542.5,421" fill="none" stroke="#00ff00" stroke-width="1.3" stroke-linejoin="bevel"/>
<path d="M738.5,527 L738.5,495 M732.5,507 L738.5,495 L744.5,507" fill="none" stroke="#00ff00" stroke-width="1.3" stroke-linejoin="bevel"/>
<line x1="843" y1="210.5" x2="900" y2="210.5" stroke="#ff0000" stroke-width="1.2"/>
<line x1="843" y1="322.5" x2="900" y2="322.5" stroke="#ff0000" stroke-width="1.2"/>
<line x1="843" y1="433.5" x2="900" y2="433.5" stroke="#ff0000" stroke-width="1.2"/>
<line x1="843" y1="647.5" x2="900" y2="647.5" stroke="#ff0000" stroke-width="1.2"/>
</g></svg>
<!-- chart texts -->
<div class="lbl" style="left:304px;top:205px">T Structure</div>
<div class="lbl" style="left:31.5px;top:273px;clip-path:inset(0 0 0 47px)">Structure</div>
<div class="lbl" style="left:88px;top:366px">Small T</div>
<div class="lbl" style="left:682px;top:296px;line-height:16px">New T Structure<br>(collapsing?)</div>
<div class="lbl" style="left:598px;top:642px;line-height:16px">T Structure<br>collapsing into<br>larger structure</div>
<div class="lbl" style="left:941px;top:133px">Next Echo and Pulse Highs</div>
<div class="lbl" style="left:857px;top:191px">4412</div>
<div class="lbl" style="left:941px;top:197px;line-height:16.5px">* S/T BUY SIGNAL *<br>* NO SHORT ALERT *</div>
<div class="lbl" style="left:942px;top:245px">S/T BUY Signal at 3959 on 24 Mar</div>
<div class="lbl" style="left:941px;top:277px;line-height:16px">T volume Osc: negative on 08 Feb<br>Up</div>
<div class="lbl" style="left:857px;top:304px">4214</div>
<div class="lbl" style="left:941px;top:325px;line-height:16px">Osc: Buy Signal on 21 Mar<br>Down slightly</div>
<div class="lbl" style="left:857px;top:415px">4016</div>
<div class="lbl" style="left:941px;top:421px;line-height:16px">Click here for<br>More Information...</div>
<div class="lbl" style="left:857px;top:628px">3641</div>
<div class="lbl" style="left:941px;top:709px">Next Projected Low(s)</div>
<!-- price axis -->
<div class="a" style="left:1188px;top:97px;width:61px;height:652px;background:#d4d0c8;border:1px solid #000"></div>
<div class="a" style="left:1191px;top:104px;width:6px;height:2px;background:#000"></div>
<div class="ax" style="left:1197px;top:98px">4600.00</div>
<div class="a" style="left:1191px;top:160px;width:6px;height:2px;background:#000"></div>
<div class="ax" style="left:1197px;top:154px">4500.00</div>
<div class="a" style="left:1191px;top:217px;width:6px;height:2px;background:#000"></div>
<div class="ax" style="left:1197px;top:210px">4400.00</div>
<div class="a" style="left:1191px;top:274px;width:6px;height:2px;background:#000"></div>
<div class="ax" style="left:1197px;top:267px">4300.00</div>
<div class="a" style="left:1191px;top:330px;width:6px;height:2px;background:#000"></div>
<div class="ax" style="left:1197px;top:324px">4200.00</div>
<div class="a" style="left:1191px;top:386px;width:6px;height:2px;background:#000"></div>
<div class="ax" style="left:1197px;top:380px">4100.00</div>
<div class="a" style="left:1191px;top:443px;width:6px;height:2px;background:#000"></div>
<div class="ax" style="left:1197px;top:436px">4000.00</div>
<div class="a" style="left:1191px;top:499px;width:6px;height:2px;background:#000"></div>
<div class="ax" style="left:1197px;top:493px">3900.00</div>
<div class="a" style="left:1191px;top:556px;width:6px;height:2px;background:#000"></div>
<div class="ax" style="left:1197px;top:550px">3800.00</div>
<div class="a" style="left:1191px;top:612px;width:6px;height:2px;background:#000"></div>
<div class="ax" style="left:1197px;top:606px">3700.00</div>
<div class="a" style="left:1191px;top:669px;width:6px;height:2px;background:#000"></div>
<div class="ax" style="left:1197px;top:662px">3600.00</div>
<div class="a" style="left:1191px;top:726px;width:6px;height:2px;background:#000"></div>
<div class="ax" style="left:1197px;top:719px">3500.00</div>
<div class="a" style="left:1191px;top:110px;width:1px;height:2px;background:#000"></div>
<div class="a" style="left:1191px;top:116px;width:1px;height:2px;background:#000"></div>
<div class="a" style="left:1191px;top:121px;width:1px;height:2px;background:#000"></div>
<div class="a" style="left:1191px;top:127px;width:1px;height:2px;background:#000"></div>
<div class="a" style="left:1191px;top:133px;width:4px;height:2px;background:#000"></div>
<div class="a" style="left:1191px;top:138px;width:1px;height:2px;background:#000"></div>
<div class="a" style="left:1191px;top:144px;width:1px;height:2px;background:#000"></div>
<div class="a" style="left:1191px;top:150px;width:1px;height:2px;background:#000"></div>
<div class="a" style="left:1191px;top:155px;width:1px;height:2px;background:#000"></div>
<div class="a" style="left:1191px;top:167px;width:1px;height:2px;background:#000"></div>
<div class="a" style="left:1191px;top:172px;width:1px;height:2px;background:#000"></div>
<div class="a" style="left:1191px;top:178px;width:1px;height:2px;background:#000"></div>
<div class="a" style="left:1191px;top:184px;width:1px;height:2px;background:#000"></div>
<div class="a" style="left:1191px;top:189px;width:4px;height:2px;background:#000"></div>
<div class="a" style="left:1191px;top:195px;width:1px;height:2px;background:#000"></div>
<div class="a" style="left:1191px;top:201px;width:1px;height:2px;background:#000"></div>
<div class="a" style="left:1191px;top:206px;width:1px;height:2px;background:#000"></div>
<div class="a" style="left:1191px;top:212px;width:1px;height:2px;background:#000"></div>
<div class="a" style="left:1191px;top:223px;width:1px;height:2px;background:#000"></div>
<div class="a" style="left:1191px;top:229px;width:1px;height:2px;background:#000"></div>
<div class="a" style="left:1191px;top:234px;width:1px;height:2px;background:#000"></div>
<div class="a" style="left:1191px;top:240px;width:1px;height:2px;background:#000"></div>
<div class="a" style="left:1191px;top:246px;width:4px;height:2px;background:#000"></div>
<div class="a" style="left:1191px;top:251px;width:1px;height:2px;background:#000"></div>
<div class="a" style="left:1191px;top:257px;width:1px;height:2px;background:#000"></div>
<div class="a" style="left:1191px;top:263px;width:1px;height:2px;background:#000"></div>
<div class="a" style="left:1191px;top:268px;width:1px;height:2px;background:#000"></div>
<div class="a" style="left:1191px;top:280px;width:1px;height:2px;background:#000"></div>
<div class="a" style="left:1191px;top:285px;width:1px;height:2px;background:#000"></div>
<div class="a" style="left:1191px;top:291px;width:1px;height:2px;background:#000"></div>
<div class="a" style="left:1191px;top:297px;width:1px;height:2px;background:#000"></div>
<div class="a" style="left:1191px;top:302px;width:4px;height:2px;background:#000"></div>
<div class="a" style="left:1191px;top:308px;width:1px;height:2px;background:#000"></div>
<div class="a" style="left:1191px;top:314px;width:1px;height:2px;background:#000"></div>
<div class="a" style="left:1191px;top:319px;width:1px;height:2px;background:#000"></div>
<div class="a" style="left:1191px;top:325px;width:1px;height:2px;background:#000"></div>
<div class="a" style="left:1191px;top:336px;width:1px;height:2px;background:#000"></div>
<div class="a" style="left:1191px;top:342px;width:1px;height:2px;background:#000"></div>
<div class="a" style="left:1191px;top:347px;width:1px;height:2px;background:#000"></div>
<div class="a" style="left:1191px;top:353px;width:1px;height:2px;background:#000"></div>
<div class="a" style="left:1191px;top:359px;width:4px;height:2px;background:#000"></div>
<div class="a" style="left:1191px;top:364px;width:1px;height:2px;background:#000"></div>
<div class="a" style="left:1191px;top:370px;width:1px;height:2px;background:#000"></div>
<div class="a" style="left:1191px;top:376px;width:1px;height:2px;background:#000"></div>
<div class="a" style="left:1191px;top:381px;width:1px;height:2px;background:#000"></div>
<div class="a" style="left:1191px;top:393px;width:1px;height:2px;background:#000"></div>
<div class="a" style="left:1191px;top:398px;width:1px;height:2px;background:#000"></div>
<div class="a" style="left:1191px;top:404px;width:1px;height:2px;background:#000"></div>
<div class="a" style="left:1191px;top:410px;width:1px;height:2px;background:#000"></div>
<div class="a" style="left:1191px;top:415px;width:4px;height:2px;background:#000"></div>
<div class="a" style="left:1191px;top:421px;width:1px;height:2px;background:#000"></div>
<div class="a" style="left:1191px;top:427px;width:1px;height:2px;background:#000"></div>
<div class="a" style="left:1191px;top:432px;width:1px;height:2px;background:#000"></div>
<div class="a" style="left:1191px;top:438px;width:1px;height:2px;background:#000"></div>
<div class="a" style="left:1191px;top:449px;width:1px;height:2px;background:#000"></div>
<div class="a" style="left:1191px;top:455px;width:1px;height:2px;background:#000"></div>
<div class="a" style="left:1191px;top:460px;width:1px;height:2px;background:#000"></div>
<div class="a" style="left:1191px;top:466px;width:1px;height:2px;background:#000"></div>
<div class="a" style="left:1191px;top:472px;width:4px;height:2px;background:#000"></div>
<div class="a" style="left:1191px;top:477px;width:1px;height:2px;background:#000"></div>
<div class="a" style="left:1191px;top:483px;width:1px;height:2px;background:#000"></div>
<div class="a" style="left:1191px;top:489px;width:1px;height:2px;background:#000"></div>
<div class="a" style="left:1191px;top:494px;width:1px;height:2px;background:#000"></div>
<div class="a" style="left:1191px;top:506px;width:1px;height:2px;background:#000"></div>
<div class="a" style="left:1191px;top:511px;width:1px;height:2px;background:#000"></div>
<div class="a" style="left:1191px;top:517px;width:1px;height:2px;background:#000"></div>
<div class="a" style="left:1191px;top:523px;width:1px;height:2px;background:#000"></div>
<div class="a" style="left:1191px;top:528px;width:4px;height:2px;background:#000"></div>
<div class="a" style="left:1191px;top:534px;width:1px;height:2px;background:#000"></div>
<div class="a" style="left:1191px;top:540px;width:1px;height:2px;background:#000"></div>
<div class="a" style="left:1191px;top:545px;width:1px;height:2px;background:#000"></div>
<div class="a" style="left:1191px;top:551px;width:1px;height:2px;background:#000"></div>
<div class="a" style="left:1191px;top:562px;width:1px;height:2px;background:#000"></div>
<div class="a" style="left:1191px;top:568px;width:1px;height:2px;background:#000"></div>
<div class="a" style="left:1191px;top:573px;width:1px;height:2px;background:#000"></div>
<div class="a" style="left:1191px;top:579px;width:1px;height:2px;background:#000"></div>
<div class="a" style="left:1191px;top:585px;width:4px;height:2px;background:#000"></div>
<div class="a" style="left:1191px;top:590px;width:1px;height:2px;background:#000"></div>
<div class="a" style="left:1191px;top:596px;width:1px;height:2px;background:#000"></div>
<div class="a" style="left:1191px;top:602px;width:1px;height:2px;background:#000"></div>
<div class="a" style="left:1191px;top:607px;width:1px;height:2px;background:#000"></div>
<div class="a" style="left:1191px;top:619px;width:1px;height:2px;background:#000"></div>
<div class="a" style="left:1191px;top:624px;width:1px;height:2px;background:#000"></div>
<div class="a" style="left:1191px;top:630px;width:1px;height:2px;background:#000"></div>
<div class="a" style="left:1191px;top:636px;width:1px;height:2px;background:#000"></div>
<div class="a" style="left:1191px;top:641px;width:4px;height:2px;background:#000"></div>
<div class="a" style="left:1191px;top:647px;width:1px;height:2px;background:#000"></div>
<div class="a" style="left:1191px;top:653px;width:1px;height:2px;background:#000"></div>
<div class="a" style="left:1191px;top:658px;width:1px;height:2px;background:#000"></div>
<div class="a" style="left:1191px;top:664px;width:1px;height:2px;background:#000"></div>
<div class="a" style="left:1191px;top:675px;width:1px;height:2px;background:#000"></div>
<div class="a" style="left:1191px;top:681px;width:1px;height:2px;background:#000"></div>
<div class="a" style="left:1191px;top:686px;width:1px;height:2px;background:#000"></div>
<div class="a" style="left:1191px;top:692px;width:1px;height:2px;background:#000"></div>
<div class="a" style="left:1191px;top:698px;width:4px;height:2px;background:#000"></div>
<div class="a" style="left:1191px;top:703px;width:1px;height:2px;background:#000"></div>
<div class="a" style="left:1191px;top:709px;width:1px;height:2px;background:#000"></div>
<div class="a" style="left:1191px;top:715px;width:1px;height:2px;background:#000"></div>
<div class="a" style="left:1191px;top:720px;width:1px;height:2px;background:#000"></div>
<div class="a" style="left:1191px;top:732px;width:1px;height:2px;background:#000"></div>
<div class="a" style="left:1191px;top:737px;width:1px;height:2px;background:#000"></div>
<div class="a" style="left:1191px;top:743px;width:1px;height:2px;background:#000"></div>
<div class="a" style="left:1224px;top:732px;width:25px;height:17px;background:#c0c0c0;border:1px solid #000;box-shadow:inset 1px 1px #fff"></div>
<svg style="left:1225px;top:733px" width="23" height="15"><rect x="1" y="1" width="4" height="3" fill="#808080"/><path d="M5,3 q6,-2 13,0" stroke="#000" fill="none"/><path d="M8,4 l3,3 l3,-3" stroke="#ff0" stroke-width="1.5" fill="none"/><path d="M11,7v7" stroke="#ff0" stroke-width="2"/><path d="M2,11 l3,-7 l3,7z M15,11 l3,-7 l3,7z" fill="none" stroke="#000"/><path d="M3,11h4M16,11h4" stroke="#ff0" stroke-width="1.5"/></svg>
<div class="ax" style="left:1197px;top:97px;clip-path:inset(8px 0 0 0)">4600.00</div>
<div class="a" style="left:1189px;top:98px;width:59px;height:8px;background:#ffffe8;border-bottom:1px solid #000;overflow:hidden"><div class="ax" style="left:6px;top:-6px">4611.98</div></div>
<!-- separator -->
<div class="a" style="left:77px;top:749px;width:1173px;height:2px;background:#f4f3f0"></div>
<!-- osc panel -->
<div class="a" style="left:77px;top:754px;width:1112px;height:168px;background:#fff;border-top:1px solid #000;border-left:1px solid #000;border-bottom:1px solid #000"></div>
<svg width="1280" height="983" style="left:0;top:0" shape-rendering="crispEdges">
<defs><clipPath id="oc"><rect x="79" y="756" width="1109" height="165"/></clipPath></defs>
<g clip-path="url(#oc)">
<rect x="80" y="815" width="1" height="35" fill="#0000ff"/>
<rect x="87" y="822" width="1" height="28" fill="#0000ff"/>
<rect x="94" y="826" width="1" height="24" fill="#0000ff"/>
<rect x="101" y="830" width="1" height="20" fill="#0000ff"/>
<rect x="108" y="815" width="1" height="35" fill="#0000ff"/>
<rect x="115" y="799" width="1" height="51" fill="#0000ff"/>
<rect x="122" y="786" width="1" height="64" fill="#0000ff"/>
<rect x="129" y="775" width="1" height="75" fill="#0000ff"/>
<rect x="136" y="762" width="1" height="88" fill="#0000ff"/>
<rect x="143" y="764" width="1" height="86" fill="#0000ff"/>
<rect x="150" y="769" width="1" height="81" fill="#0000ff"/>
<rect x="157" y="776" width="1" height="74" fill="#0000ff"/>
<rect x="164" y="780" width="1" height="70" fill="#0000ff"/>
<rect x="171" y="779" width="1" height="71" fill="#0000ff"/>
<rect x="178" y="773" width="1" height="77" fill="#0000ff"/>
<rect x="185" y="775" width="1" height="75" fill="#0000ff"/>
<rect x="192" y="779" width="1" height="71" fill="#0000ff"/>
<rect x="199" y="781" width="1" height="69" fill="#0000ff"/>
<rect x="206" y="782" width="1" height="68" fill="#0000ff"/>
<rect x="213" y="786" width="1" height="64" fill="#0000ff"/>
<rect x="220" y="787" width="1" height="63" fill="#0000ff"/>
<rect x="227" y="791" width="1" height="59" fill="#0000ff"/>
<rect x="234" y="800" width="1" height="50" fill="#0000ff"/>
<rect x="241" y="813" width="1" height="37" fill="#0000ff"/>
<rect x="248" y="825" width="1" height="25" fill="#0000ff"/>
<rect x="255" y="834" width="1" height="16" fill="#0000ff"/>
<rect x="262" y="829" width="1" height="21" fill="#0000ff"/>
<rect x="269" y="825" width="1" height="25" fill="#0000ff"/>
<rect x="276" y="829" width="1" height="21" fill="#0000ff"/>
<rect x="283" y="838" width="1" height="12" fill="#0000ff"/>
<rect x="290" y="850" width="1" height="2" fill="#0000ff"/>
<rect x="297" y="850" width="1" height="19" fill="#0000ff"/>
<rect x="304" y="850" width="1" height="33" fill="#0000ff"/>
<rect x="311" y="850" width="1" height="42" fill="#0000ff"/>
<rect x="318" y="850" width="1" height="47" fill="#0000ff"/>
<rect x="325" y="850" width="1" height="47" fill="#0000ff"/>
<rect x="332" y="850" width="1" height="47" fill="#0000ff"/>
<rect x="339" y="850" width="1" height="51" fill="#0000ff"/>
<rect x="346" y="850" width="1" height="51" fill="#0000ff"/>
<rect x="353" y="850" width="1" height="49" fill="#0000ff"/>
<rect x="360" y="850" width="1" height="46" fill="#0000ff"/>
<rect x="367" y="850" width="1" height="43" fill="#0000ff"/>
<rect x="374" y="850" width="1" height="39" fill="#0000ff"/>
<rect x="381" y="850" width="1" height="30" fill="#0000ff"/>
<rect x="388" y="850" width="1" height="24" fill="#0000ff"/>
<rect x="395" y="850" width="1" height="14" fill="#0000ff"/>
<rect x="402" y="850" width="1" height="2" fill="#0000ff"/>
<rect x="409" y="840" width="1" height="10" fill="#0000ff"/>
<rect x="416" y="833" width="1" height="17" fill="#0000ff"/>
<rect x="423" y="826" width="1" height="24" fill="#0000ff"/>
<rect x="430" y="829" width="1" height="21" fill="#0000ff"/>
<rect x="437" y="831" width="1" height="19" fill="#0000ff"/>
<rect x="444" y="829" width="1" height="21" fill="#0000ff"/>
<rect x="451" y="827" width="1" height="23" fill="#0000ff"/>
<rect x="458" y="825" width="1" height="25" fill="#0000ff"/>
<rect x="465" y="814" width="1" height="36" fill="#0000ff"/>
<rect x="472" y="803" width="1" height="47" fill="#0000ff"/>
<rect x="479" y="801" width="1" height="49" fill="#0000ff"/>
<rect x="486" y="799" width="1" height="51" fill="#0000ff"/>
<rect x="493" y="791" width="1" height="59" fill="#0000ff"/>
<rect x="500" y="782" width="1" height="68" fill="#0000ff"/>
<rect x="507" y="776" width="1" height="74" fill="#0000ff"/>
<rect x="514" y="771" width="1" height="79" fill="#0000ff"/>
<rect x="521" y="767" width="1" height="83" fill="#0000ff"/>
<rect x="528" y="766" width="1" height="84" fill="#0000ff"/>
<rect x="535" y="775" width="1" height="75" fill="#0000ff"/>
<rect x="542" y="785" width="1" height="65" fill="#0000ff"/>
<rect x="549" y="787" width="1" height="63" fill="#0000ff"/>
<rect x="556" y="792" width="1" height="58" fill="#0000ff"/>
<rect x="563" y="796" width="1" height="54" fill="#0000ff"/>
<rect x="570" y="800" width="1" height="50" fill="#0000ff"/>
<rect x="577" y="804" width="1" height="46" fill="#0000ff"/>
<rect x="584" y="815" width="1" height="35" fill="#0000ff"/>
<rect x="591" y="829" width="1" height="21" fill="#0000ff"/>
<rect x="598" y="842" width="1" height="8" fill="#0000ff"/>
<rect x="605" y="850" width="1" height="8" fill="#0000ff"/>
<rect x="612" y="850" width="1" height="16" fill="#0000ff"/>
<rect x="619" y="850" width="1" height="20" fill="#0000ff"/>
<rect x="626" y="850" width="1" height="25" fill="#0000ff"/>
<rect x="633" y="850" width="1" height="30" fill="#0000ff"/>
<rect x="640" y="850" width="1" height="25" fill="#0000ff"/>
<rect x="647" y="850" width="1" height="20" fill="#0000ff"/>
<rect x="654" y="850" width="1" height="18" fill="#0000ff"/>
<rect x="661" y="850" width="1" height="15" fill="#0000ff"/>
<rect x="668" y="850" width="1" height="15" fill="#0000ff"/>
<rect x="675" y="850" width="1" height="26" fill="#0000ff"/>
<rect x="682" y="850" width="1" height="43" fill="#0000ff"/>
<rect x="689" y="850" width="1" height="52" fill="#0000ff"/>
<rect x="696" y="850" width="1" height="61" fill="#0000ff"/>
<rect x="703" y="850" width="1" height="64" fill="#0000ff"/>
<rect x="710" y="850" width="1" height="59" fill="#0000ff"/>
<rect x="717" y="850" width="1" height="50" fill="#0000ff"/>
<rect x="724" y="850" width="1" height="42" fill="#0000ff"/>
<rect x="731" y="850" width="1" height="31" fill="#0000ff"/>
<rect x="738" y="850" width="1" height="25" fill="#0000ff"/>
<rect x="745" y="850" width="1" height="21" fill="#0000ff"/>
<rect x="752" y="850" width="1" height="14" fill="#0000ff"/>
<rect x="759" y="850" width="1" height="15" fill="#0000ff"/>
<polyline points="80.0,796.0 106.0,801.0 122.0,801.0 146.0,794.0 176.0,791.0 196.0,789.0 228.0,788.0 246.0,792.0 282.0,801.0 403.0,801.0 420.0,806.0 455.0,810.0 472.0,811.0 490.0,810.0 510.0,805.0 530.0,800.0 545.0,798.0 570.0,797.0 588.0,800.0 598.0,802.0 760.0,802.0" fill="none" stroke="#000" stroke-width="1"/>
<polyline points="285.0,920.0 310.0,915.0 332.0,910.0 360.0,907.0 380.0,903.0 402.0,899.0 600.0,898.0 604.0,896.0 640.0,891.0 666.0,886.0 686.0,886.0 710.0,889.0 724.0,891.0 740.0,890.0 760.0,886.0" fill="none" stroke="#000" stroke-width="1"/>
<path d="M87.5,757 L87.5,790 M78.5,769 L87.5,790 L96.5,769" fill="none" stroke="#ff0000" stroke-width="2.2" stroke-linejoin="bevel"/>
<path d="M227.5,745 L227.5,768 M218.5,747 L227.5,768 L236.5,747" fill="none" stroke="#ff0000" stroke-width="2.2" stroke-linejoin="bevel"/>
<path d="M563.5,755 L563.5,780 M554.5,759 L563.5,780 L572.5,759" fill="none" stroke="#ff0000" stroke-width="2.2" stroke-linejoin="bevel"/>
<path d="M675.5,805 L675.5,838 M666.5,817 L675.5,838 L684.5,817" fill="none" stroke="#ff0000" stroke-width="2.2" stroke-linejoin="bevel"/>
<path d="M115.5,925 L115.5,895 M106.5,916 L115.5,895 L124.5,916" fill="none" stroke="#00ff00" stroke-width="2.2" stroke-linejoin="bevel"/>
<path d="M654.5,925 L654.5,893 M645.5,914 L654.5,893 L663.5,914" fill="none" stroke="#00ff00" stroke-width="2.2" stroke-linejoin="bevel"/>
<path d="M724.5,925 L724.5,903 M715.5,924 L724.5,903 L733.5,924" fill="none" stroke="#00ff00" stroke-width="2.2" stroke-linejoin="bevel"/>
</g></svg>
<div class="lbl" style="left:78px;top:755px;font-size:13px">Osc 5,35</div>
<div class="lbl" style="left:745px;top:885px">Osc Buy Signal</div>
<div class="a" style="left:1188px;top:754px;width:61px;height:184px;background:#d4d0c8;border:1px solid #000;border-top:2px solid #000;border-bottom:2px solid #000"></div>
<div class="a" style="left:1191px;top:760px;width:6px;height:2px;background:#000"></div>
<div class="ax" style="left:1197px;top:754px">200</div>
<div class="a" style="left:1191px;top:804px;width:6px;height:2px;background:#000"></div>
<div class="ax" style="left:1197px;top:798px">100</div>
<div class="a" style="left:1191px;top:848px;width:6px;height:2px;background:#000"></div>
<div class="ax" style="left:1197px;top:842px">0</div>
<div class="a" style="left:1191px;top:892px;width:6px;height:2px;background:#000"></div>
<div class="ax" style="left:1197px;top:886px">-100</div>
<div class="a" style="left:1191px;top:757px;width:2px;height:1px;background:#000"></div>
<div class="a" style="left:1191px;top:767px;width:2px;height:1px;background:#000"></div>
<div class="a" style="left:1191px;top:772px;width:2px;height:1px;background:#000"></div>
<div class="a" style="left:1191px;top:777px;width:2px;height:1px;background:#000"></div>
<div class="a" style="left:1191px;top:782px;width:2px;height:1px;background:#000"></div>
<div class="a" style="left:1191px;top:787px;width:2px;height:1px;background:#000"></div>
<div class="a" style="left:1191px;top:792px;width:2px;height:1px;background:#000"></div>
<div class="a" style="left:1191px;top:797px;width:2px;height:1px;background:#000"></div>
<div class="a" style="left:1191px;top:802px;width:2px;height:1px;background:#000"></div>
<div class="a" style="left:1191px;top:812px;width:2px;height:1px;background:#000"></div>
<div class="a" style="left:1191px;top:817px;width:2px;height:1px;background:#000"></div>
<div class="a" style="left:1191px;top:822px;width:2px;height:1px;background:#000"></div>
<div class="a" style="left:1191px;top:827px;width:2px;height:1px;background:#000"></div>
<div class="a" style="left:1191px;top:832px;width:2px;height:1px;background:#000"></div>
<div class="a" style="left:1191px;top:837px;width:2px;height:1px;background:#000"></div>
<div class="a" style="left:1191px;top:842px;width:2px;height:1px;background:#000"></div>
<div class="a" style="left:1191px;top:847px;width:2px;height:1px;background:#000"></div>
<div class="a" style="left:1191px;top:852px;width:2px;height:1px;background:#000"></div>
<div class="a" style="left:1191px;top:857px;width:2px;height:1px;background:#000"></div>
<div class="a" style="left:1191px;top:862px;width:2px;height:1px;background:#000"></div>
<div class="a" style="left:1191px;top:867px;width:2px;height:1px;background:#000"></div>
<div class="a" style="left:1191px;top:872px;width:2px;height:1px;background:#000"></div>
<div class="a" style="left:1191px;top:877px;width:2px;height:1px;background:#000"></div>
<div class="a" style="left:1191px;top:882px;width:2px;height:1px;background:#000"></div>
<div class="a" style="left:1191px;top:887px;width:2px;height:1px;background:#000"></div>
<div class="a" style="left:1191px;top:892px;width:2px;height:1px;background:#000"></div>
<div class="a" style="left:1191px;top:897px;width:2px;height:1px;background:#000"></div>
<div class="a" style="left:1191px;top:902px;width:2px;height:1px;background:#000"></div>
<div class="a" style="left:1191px;top:907px;width:2px;height:1px;background:#000"></div>
<div class="a" style="left:1191px;top:912px;width:2px;height:1px;background:#000"></div>
<div class="a" style="left:1191px;top:917px;width:2px;height:1px;background:#000"></div>
<div class="a" style="left:1189px;top:865px;width:59px;height:16px;background:#ffffe8;border-top:1px solid #000;border-bottom:1px solid #000"></div>
<div class="ax" style="left:1209px;top:866px">-53</div>
<!-- tabs -->
<div class="a" style="left:77px;top:922px;width:1111px;height:16px;background:#d4d0c8;border-left:2px solid #000"></div>
<div class="btn" style="left:78px;top:922px;width:16px;height:16px"><div style="position:absolute;left:5px;top:4px;width:0;height:0;border-top:4px solid transparent;border-bottom:4px solid transparent;border-right:4px solid #000"></div></div>
<div class="btn" style="left:95px;top:922px;width:16px;height:16px"><div style="position:absolute;left:6px;top:4px;width:0;height:0;border-top:4px solid transparent;border-bottom:4px solid transparent;border-left:4px solid #000"></div></div>
<svg style="left:0;top:0" width="1280" height="983">
<path d="M171,921.5 L177,937.5 L206,937.5 L212,921.5" fill="#d4d0c8" stroke="#000" stroke-width="1"/>
<path d="M212,921.5 L218,937.5 L290,937.5 L296,921.5" fill="#d4d0c8" stroke="#000" stroke-width="1"/>
<path d="M296,921.5 L302,937.5 L373,937.5 L379,921.5" fill="#d4d0c8" stroke="#000" stroke-width="1"/>
<path d="M379,921.5 L385,937.5 L440,937.5 L446,921.5" fill="#d4d0c8" stroke="#000" stroke-width="1"/>
<path d="M446,921.5 L452,937.5 L500,937.5 L506,921.5" fill="#d4d0c8" stroke="#000" stroke-width="1"/>
<path d="M506,921.5 L512,937.5 L607,937.5 L613,921.5" fill="#d4d0c8" stroke="#000" stroke-width="1"/>
<path d="M113,921.5 L119,937.5 L164,937.5 L170,921.5" fill="#ffffff" stroke="#000" stroke-width="1"/>
</svg>
<div class="a" style="left:113px;width:57px;top:922px;text-align:center;font-size:11px;line-height:15px;color:#000;white-space:nowrap;letter-spacing:-0.1px">Osc 5,35</div>
<div class="a" style="left:171px;width:41px;top:922px;text-align:center;font-size:11px;line-height:15px;color:#000;white-space:nowrap;letter-spacing:-0.1px">CCI 20</div>
<div class="a" style="left:212px;width:84px;top:922px;text-align:center;font-size:11px;line-height:15px;color:#000;white-space:nowrap;letter-spacing:-0.1px">MACD 19, 39, 9</div>
<div class="a" style="left:296px;width:83px;top:922px;text-align:center;font-size:11px;line-height:15px;color:#000;white-space:nowrap;letter-spacing:-0.1px">Money Flow 11</div>
<div class="a" style="left:379px;width:67px;top:922px;text-align:center;font-size:11px;line-height:15px;color:#000;white-space:nowrap;letter-spacing:-0.1px">RSI 14, 7, 3</div>
<div class="a" style="left:446px;width:60px;top:922px;text-align:center;font-size:11px;line-height:15px;color:#000;white-space:nowrap;letter-spacing:-0.1px">RSI 2, 7, 3</div>
<div class="a" style="left:506px;width:107px;top:922px;text-align:center;font-size:11px;line-height:15px;color:#000;white-space:nowrap;letter-spacing:-0.1px">On Balance Volume</div>
<!-- date axis -->
<div class="a" style="left:77px;top:938px;width:1173px;height:1px;background:#fff"></div>
<div class="a" style="left:77px;top:943px;width:1111px;height:20px;background:#d4d0c8;border:2px solid #000;border-right:1px solid #000;border-bottom:2px solid #000"></div>
<div class="a" style="left:206px;top:945px;width:1px;height:16px;background:#000"></div>
<div class="lbl" style="left:208px;top:945px;font-size:13px">Dec</div>
<div class="a" style="left:352px;top:945px;width:1px;height:16px;background:#000"></div>
<div class="lbl" style="left:354px;top:945px;font-size:13px">2023</div>
<div class="a" style="left:492px;top:945px;width:1px;height:16px;background:#000"></div>
<div class="lbl" style="left:494px;top:945px;font-size:13px">Feb</div>
<div class="a" style="left:597px;top:944px;width:56px;height:17px;background:#ffffe8;border:1px solid #000"></div>
<div class="lbl" style="left:599px;top:945px;font-size:13px">03/01/23</div>
<div class="a" style="left:1188px;top:943px;width:62px;height:20px;background:#ffffe8;border-top:1px solid #000"></div>
<div class="lbl" style="left:1199px;top:945px;font-size:13px;color:#0000ff">#2981</div>
<div class="a" style="left:0;top:964px;width:1280px;height:1px;background:#808080"></div>
<div class="a" style="left:0;top:965px;width:1280px;height:1px;background:#fff"></div>
<!-- status bar -->
<div class="a" style="left:2px;top:968px;font-size:11.5px;line-height:16px;color:#000">For Help, press F1</div>
<div class="sunk" style="left:954px;top:967px;width:326px;height:16px"></div>
<div class="a" style="left:956px;top:968px;font-size:11.5px;line-height:16px;color:#000">Page: 14 - SP 500 for blog</div>
</body></html>
